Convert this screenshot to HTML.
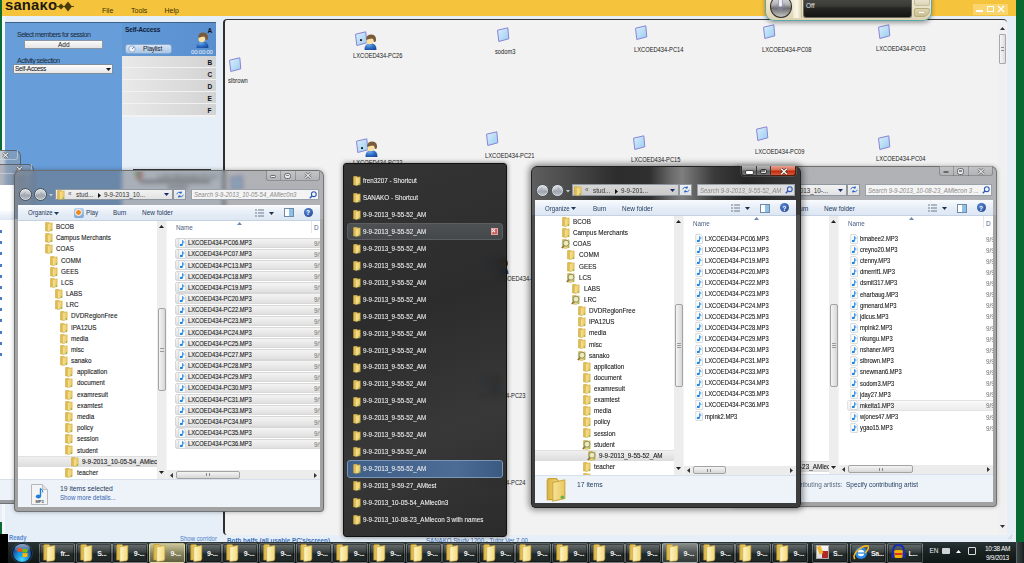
<!DOCTYPE html><html><head><meta charset="utf-8"><style>
*{margin:0;padding:0;box-sizing:border-box}
html,body{width:1024px;height:563px;overflow:hidden}
body{position:relative;background:#e6eff8;font-family:"Liberation Sans",sans-serif;color:#000}
div{position:absolute}
.t{white-space:nowrap;line-height:1}
.fo{width:7px;height:9px;background:linear-gradient(90deg,#e9c860 0%,#fbeaa4 35%,#f4d77a 70%,#d9b24a 100%);border:1px solid #c8a43e;border-radius:1px 2px 1px 1px}
.fs{width:9px;height:9px;}
.mp{width:7px;height:9px;background:#fff;border:1px solid #b9bec4;border-radius:1px}
.mp:after{content:"";position:absolute;left:1px;top:2px;width:3px;height:4px;border-radius:50%;background:#2f8fe0}
.ic{}

.frm{border-radius:6px 6px 4px 4px}
.nv{border-radius:50%;background:linear-gradient(#e2e4e6,#bcc2c8 48%,#98a0a8 52%,#c0c6cc);border:1.3px solid #4a525a;box-shadow:inset 0 0 0 0.6px #e8eaec}
.adr{background:linear-gradient(#f2f2f2,#e2e2e2);border:1px solid #8e96a0}
.srch{background:#f4f4f4;border:1px solid #9aa1aa}
.tb{background:linear-gradient(#f9fbfe,#e4ecf6 60%,#dde7f3);border-bottom:1px solid #c5d2e2}
.nvp{background:#fff}
.e{font-size:7px;letter-spacing:-0.35px;color:#1e1e1e}
.eb{font-size:7px;letter-spacing:-0.3px;color:#1e3a5f}
.sel{background:linear-gradient(#f2f2f2,#dedede);border:1px solid #d3d3d3;border-radius:2px}
.sb{background:#eaeaea}
.thumb{background:linear-gradient(90deg,#f4f4f4,#d7d7d7);border:1px solid #a3a3a3;border-radius:2px}
.thumbh{background:linear-gradient(#f4f4f4,#d7d7d7);border:1px solid #a3a3a3;border-radius:2px}
.dp{background:#eef3fa;border-top:1px solid #d6e1ee}

.tk{background:linear-gradient(#2a3434,#1a2222 45%,#0f1616);}
.tbn{background:linear-gradient(rgba(255,255,255,0.3),rgba(255,255,255,0.14) 45%,rgba(255,255,255,0.04) 55%,rgba(255,255,255,0.07));border:1px solid rgba(255,255,255,0.2);border-radius:2px;box-shadow:inset 0 0 0 1px rgba(0,0,0,0.4)}
.tbh{background:linear-gradient(rgba(230,230,225,0.5),rgba(170,175,170,0.35) 50%,rgba(110,120,115,0.35));border:1px solid rgba(255,255,255,0.4);border-radius:2px}
.tby{background:linear-gradient(rgba(245,235,180,0.8),rgba(200,190,130,0.65) 50%,rgba(150,145,95,0.6));border:1px solid rgba(255,250,200,0.55);border-radius:2px}
.tf{width:12px;height:16px;background:linear-gradient(90deg,#e0bd55,#fbe9a0 40%,#f0d57a 75%,#c9a040);border:1px solid #a88a30;border-radius:1px 3px 1px 1px}
</style></head><body><svg width="0" height="0" style="position:absolute"><defs><linearGradient id="gfl" x1="0" y1="0" x2="1" y2="0"><stop offset="0" stop-color="#f7e49a"/><stop offset="1" stop-color="#e9c85e"/></linearGradient><linearGradient id="gfb" x1="0" y1="0" x2="1" y2="0"><stop offset="0" stop-color="#d9b346"/><stop offset="1" stop-color="#f2d674"/></linearGradient><g id="fsm"><path d="M0.5 1 Q0.5 0.3 1.2 0.3 H4 L4.6 1 V9 H0.5Z" fill="url(#gfb)" stroke="#c9a43c" stroke-width="0.5"/><path d="M2.6 1.8 L7.2 0.8 V8.6 L2.6 9.6Z" fill="url(#gfl)" stroke="#d1ad45" stroke-width="0.5"/><circle cx="6.3" cy="8" r="0.7" fill="#6ab04a"/></g><g id="ftb"><path d="M0.7 1.5 Q0.7 0.5 1.7 0.5 H6 L7 1.6 V16 H0.7Z" fill="url(#gfb)" stroke="#b8942e" stroke-width="0.6"/><path d="M3.8 3 L11.8 1.4 V14.8 L10.8 16.8 L3.8 17.5Z" fill="url(#gft)" stroke="#c8a23a" stroke-width="0.6"/></g><linearGradient id="gft" x1="0" y1="0" x2="1" y2="0"><stop offset="0" stop-color="#fff6c8"/><stop offset="1" stop-color="#f2d878"/></linearGradient><g id="mp3s"><path d="M0.8 0.6H5.6L7.6 2.6V8.8Q7.6 9.4 7 9.4H1.4Q0.8 9.4 0.8 8.8Z" fill="#fdfdfd" stroke="#c4c8cc" stroke-width="0.7"/><path d="M4.6 2.4V6.8" stroke="#1a86e6" stroke-width="0.9"/><path d="M4.6 2.4Q6.4 3.4 5.8 5.2" stroke="#1a86e6" stroke-width="0.8" fill="none"/><ellipse cx="3.3" cy="6.9" rx="1.5" ry="1.2" fill="#1a86e6"/></g></defs></svg>
<div style="left:0px;top:0px;width:2px;height:150px;background:#0a6b33"></div>
<div style="left:0px;top:522px;width:1.5px;height:12px;background:#0a6b33"></div>
<div style="left:2px;top:0px;width:1014px;height:16px;background:#f6c33c"></div>
<div style="left:1016px;top:0px;width:8px;height:542px;background:#07692f"></div>
<div style="left:2px;top:16px;width:3px;height:518px;background:#f4f8fc"></div>
<div class="t" style="left:4.5px;top:-3.2px;font:bold 14.5px Liberation Sans,sans-serif;letter-spacing:0.2px;color:#1e1a10;transform:scaleX(1.02);transform-origin:0 0">sana&#954;o</div>
<svg style="position:absolute;left:55px;top:1px" width="20" height="12" viewBox="0 0 20 12"><path d="M0 5.5 H19" stroke="#5a4a10" stroke-width="1"/><path d="M3 5.5 L6 2.5 L9 5.5 L6 8.5Z M9 5.5 L13 0.5 L17 5.5 L13 10.5Z" fill="#4a3d0c"/></svg>
<div class="t" style="left:102px;top:7px;font-size:7px;color:#3b3000">File</div>
<div class="t" style="left:131px;top:7px;font-size:7px;color:#3b3000">Tools</div>
<div class="t" style="left:164.5px;top:7px;font-size:7px;color:#3b3000">Help</div>
<div style="left:973px;top:4px;width:35px;height:11px;background:rgba(255,235,170,0.45)"></div>
<div style="left:976px;top:10px;width:7px;height:2px;background:#fff"></div>
<div style="left:987px;top:6px;width:7px;height:6px;border:1px solid #fff"></div>
<svg style="position:absolute;left:997px;top:5px" width="8" height="8" viewBox="0 0 8 8"><path d="M1 1L7 7M7 1L1 7" stroke="#fff" stroke-width="1.3"/></svg>
<div style="left:5px;top:22px;width:211px;height:480px;background:#679dd8;border-top:1px solid #40618a"></div>
<div style="left:122px;top:23px;width:94px;height:33px;background:linear-gradient(90deg,#6199d6,#5a8fcf)"></div>
<div style="left:122px;top:116px;width:94px;height:400px;background:#e6eff8"></div>
<div style="left:122px;top:56px;width:94px;height:61px;background:#f2f2f2"></div>
<div style="left:216px;top:22px;width:8px;height:512px;background:#e6eff8"></div>
<div class="t" style="left:17px;top:31px;font-size:7px;letter-spacing:-0.5px;color:#1b2a3a">Select members for session</div>
<div style="left:24px;top:40px;width:79px;height:9px;background:linear-gradient(#fbfbfb,#e4e4e4);border:1px solid #8a96a4;border-radius:1px"></div>
<div class="t" style="left:58px;top:42px;font-size:6.5px;color:#222">Add</div>
<div class="t" style="left:17px;top:57px;font-size:7px;letter-spacing:-0.5px;color:#1b2a3a">Activity selection</div>
<div style="left:13px;top:64px;width:100px;height:10px;background:linear-gradient(#fdfdfd,#e6e6e6);border:1px solid #7f8c9a;border-radius:1px"></div>
<div class="t" style="left:15px;top:66px;font-size:6.5px;letter-spacing:-0.3px;color:#111">Self-Access</div>
<svg style="position:absolute;left:106px;top:68px" width="5" height="3"><path d="M0 0H5L2.5 3Z" fill="#111"/></svg>
<div class="t" style="left:125px;top:26px;font:bold 6.6px Liberation Sans,sans-serif;letter-spacing:-0.2px;color:#10203a">Self-Access</div>
<div class="t" style="left:207.5px;top:27px;font:bold 6.5px Liberation Sans,sans-serif;color:#111">A</div>
<div style="left:125px;top:44px;width:47px;height:10px;background:linear-gradient(#d7e6f6,#a9c6e6);border:1px solid #86a8d0;border-radius:3px"></div>
<svg style="position:absolute;left:128px;top:45px" width="8" height="8"><circle cx="4" cy="4" r="3.2" fill="#eef4fb" stroke="#7f9cc0" stroke-width="0.8"/><path d="M4 4L6 2" stroke="#667" stroke-width="0.8"/></svg>
<div class="t" style="left:143px;top:46px;font-size:6.5px;letter-spacing:-0.2px;color:#1a1a2a">Playlist</div>
<div class="t" style="left:191px;top:49px;font-size:6px;letter-spacing:-0.2px;color:#eaf2fb">00:00:00</div>
<div style="left:122px;top:56px;width:94px;height:11px;background:linear-gradient(90deg,#e9e9e9,#d3d3d3)"></div>
<div class="t" style="left:207.5px;top:59px;font:bold 6.5px Liberation Sans,sans-serif;color:#111">B</div>
<div style="left:122px;top:68px;width:94px;height:11px;background:linear-gradient(90deg,#e9e9e9,#d3d3d3)"></div>
<div class="t" style="left:207.5px;top:71px;font:bold 6.5px Liberation Sans,sans-serif;color:#111">C</div>
<div style="left:122px;top:80px;width:94px;height:11px;background:linear-gradient(90deg,#e9e9e9,#d3d3d3)"></div>
<div class="t" style="left:207.5px;top:83px;font:bold 6.5px Liberation Sans,sans-serif;color:#111">D</div>
<div style="left:122px;top:92px;width:94px;height:11px;background:linear-gradient(90deg,#e9e9e9,#d3d3d3)"></div>
<div class="t" style="left:207.5px;top:95px;font:bold 6.5px Liberation Sans,sans-serif;color:#111">E</div>
<div style="left:122px;top:104px;width:94px;height:11px;background:linear-gradient(90deg,#e9e9e9,#d3d3d3)"></div>
<div class="t" style="left:207.5px;top:107px;font:bold 6.5px Liberation Sans,sans-serif;color:#111">F</div>
<div style="left:223px;top:19px;width:784px;height:516px;background:#f2f2f2;border-top:1.5px solid #383838;border-left:2px solid #2e2e2e;border-radius:4px 4px 0 4px"></div>
<div style="left:998px;top:24px;width:8px;height:510px;background:#f0f0f0"></div>
<svg style="position:absolute;left:1000px;top:27px" width="5" height="3"><path d="M0 3H5L2.5 0Z" fill="#333"/></svg>
<div style="left:998.5px;top:33.5px;width:7.5px;height:30.5px;background:linear-gradient(90deg,#f6f6f6,#dcdcdc);border:1px solid #a8a8a8;border-radius:1px"></div>
<div style="left:1000.5px;top:46.5px;width:3.5px;height:4px;border-top:1px solid #8a8a8a;border-bottom:1px solid #8a8a8a;background:linear-gradient(transparent 35%,#8a8a8a 35%,#8a8a8a 65%,transparent 65%)"></div>
<svg style="position:absolute;left:1000px;top:525px" width="5" height="3"><path d="M0 0H5L2.5 3Z" fill="#333"/></svg>
<svg style="position:absolute;left:194.5px;top:31.5px" width="14" height="17" viewBox="0 0 14 17"><defs><radialGradient id="pb" cx="0.35" cy="0.3" r="0.8"><stop offset="0" stop-color="#6aa8e8"/><stop offset="0.6" stop-color="#2a68c0"/><stop offset="1" stop-color="#1a4a98"/></radialGradient></defs><path d="M1.5 16 Q1 9.5 7.5 9 Q13.8 9.5 13.5 16Z" fill="url(#pb)"/><ellipse cx="6.8" cy="7" rx="3.3" ry="3.2" fill="#fbe0a0"/><path d="M3.2 6 Q3 0.6 8.5 0.6 Q13.6 1 13 6.8 Q12.2 8.5 10.8 7.8 Q10.8 5 9 4.6 Q6 4.8 3.2 6Z" fill="#7a5a3a"/></svg>
<svg style="position:absolute;left:353.5px;top:30.5px" width="14" height="15" viewBox="0 0 14 15"><defs><linearGradient id="mg" x1="0" y1="0" x2="1" y2="1"><stop offset="0" stop-color="#dcf0fd"/><stop offset="1" stop-color="#98ccf0"/></linearGradient></defs><path d="M1.5 3.2 L11.8 0.8 L12.8 11.8 L2.8 14.5Z" fill="url(#mg)" stroke="#8a84d4" stroke-width="1"/></svg><svg style="position:absolute;left:362.5px;top:33.5px" width="14" height="17" viewBox="0 0 14 17"><defs><radialGradient id="pb" cx="0.35" cy="0.3" r="0.8"><stop offset="0" stop-color="#6aa8e8"/><stop offset="0.6" stop-color="#2a68c0"/><stop offset="1" stop-color="#1a4a98"/></radialGradient></defs><path d="M1.5 16 Q1 9.5 7.5 9 Q13.8 9.5 13.5 16Z" fill="url(#pb)"/><ellipse cx="6.8" cy="7" rx="3.3" ry="3.2" fill="#fbe0a0"/><path d="M3.2 6 Q3 0.6 8.5 0.6 Q13.6 1 13 6.8 Q12.2 8.5 10.8 7.8 Q10.8 5 9 4.6 Q6 4.8 3.2 6Z" fill="#7a5a3a"/></svg>
<div style="left:359.5px;top:39px;width:2.8px;height:2.4px;background:#111;border-radius:50%"></div>
<div class="t" style="left:353.27px;top:52.2px;font-size:7px;color:#1a1a1a;transform:scaleX(0.82);transform-origin:0 0">LXCOED434-PC26</div>
<svg style="position:absolute;left:496px;top:27px" width="14" height="15" viewBox="0 0 14 15"><defs><linearGradient id="mg" x1="0" y1="0" x2="1" y2="1"><stop offset="0" stop-color="#dcf0fd"/><stop offset="1" stop-color="#98ccf0"/></linearGradient></defs><path d="M1.5 3.2 L11.8 0.8 L12.8 11.8 L2.8 14.5Z" fill="url(#mg)" stroke="#8a84d4" stroke-width="1"/></svg>
<div class="t" style="left:495.29px;top:48.2px;font-size:7px;color:#1a1a1a;transform:scaleX(0.82);transform-origin:0 0">sodom3</div>
<svg style="position:absolute;left:634px;top:25px" width="14" height="15" viewBox="0 0 14 15"><defs><linearGradient id="mg" x1="0" y1="0" x2="1" y2="1"><stop offset="0" stop-color="#dcf0fd"/><stop offset="1" stop-color="#98ccf0"/></linearGradient></defs><path d="M1.5 3.2 L11.8 0.8 L12.8 11.8 L2.8 14.5Z" fill="url(#mg)" stroke="#8a84d4" stroke-width="1"/></svg>
<div class="t" style="left:633.77px;top:46.2px;font-size:7px;color:#1a1a1a;transform:scaleX(0.82);transform-origin:0 0">LXCOED434-PC14</div>
<svg style="position:absolute;left:762px;top:24px" width="14" height="15" viewBox="0 0 14 15"><defs><linearGradient id="mg" x1="0" y1="0" x2="1" y2="1"><stop offset="0" stop-color="#dcf0fd"/><stop offset="1" stop-color="#98ccf0"/></linearGradient></defs><path d="M1.5 3.2 L11.8 0.8 L12.8 11.8 L2.8 14.5Z" fill="url(#mg)" stroke="#8a84d4" stroke-width="1"/></svg>
<div class="t" style="left:761.77px;top:46.2px;font-size:7px;color:#1a1a1a;transform:scaleX(0.82);transform-origin:0 0">LXCOED434-PC08</div>
<svg style="position:absolute;left:877px;top:24px" width="14" height="15" viewBox="0 0 14 15"><defs><linearGradient id="mg" x1="0" y1="0" x2="1" y2="1"><stop offset="0" stop-color="#dcf0fd"/><stop offset="1" stop-color="#98ccf0"/></linearGradient></defs><path d="M1.5 3.2 L11.8 0.8 L12.8 11.8 L2.8 14.5Z" fill="url(#mg)" stroke="#8a84d4" stroke-width="1"/></svg>
<div class="t" style="left:876.27px;top:45.2px;font-size:7px;color:#1a1a1a;transform:scaleX(0.82);transform-origin:0 0">LXCOED434-PC03</div>
<svg style="position:absolute;left:228px;top:57px" width="14" height="15" viewBox="0 0 14 15"><defs><linearGradient id="mg" x1="0" y1="0" x2="1" y2="1"><stop offset="0" stop-color="#dcf0fd"/><stop offset="1" stop-color="#98ccf0"/></linearGradient></defs><path d="M1.5 3.2 L11.8 0.8 L12.8 11.8 L2.8 14.5Z" fill="url(#mg)" stroke="#8a84d4" stroke-width="1"/></svg>
<div class="t" style="left:228.11px;top:77.2px;font-size:7px;color:#1a1a1a;transform:scaleX(0.82);transform-origin:0 0">slbrown</div>
<svg style="position:absolute;left:354.5px;top:138px" width="14" height="15" viewBox="0 0 14 15"><defs><linearGradient id="mg" x1="0" y1="0" x2="1" y2="1"><stop offset="0" stop-color="#dcf0fd"/><stop offset="1" stop-color="#98ccf0"/></linearGradient></defs><path d="M1.5 3.2 L11.8 0.8 L12.8 11.8 L2.8 14.5Z" fill="url(#mg)" stroke="#8a84d4" stroke-width="1"/></svg><svg style="position:absolute;left:363.5px;top:140.5px" width="14" height="17" viewBox="0 0 14 17"><defs><radialGradient id="pb" cx="0.35" cy="0.3" r="0.8"><stop offset="0" stop-color="#6aa8e8"/><stop offset="0.6" stop-color="#2a68c0"/><stop offset="1" stop-color="#1a4a98"/></radialGradient></defs><path d="M1.5 16 Q1 9.5 7.5 9 Q13.8 9.5 13.5 16Z" fill="url(#pb)"/><ellipse cx="6.8" cy="7" rx="3.3" ry="3.2" fill="#fbe0a0"/><path d="M3.2 6 Q3 0.6 8.5 0.6 Q13.6 1 13 6.8 Q12.2 8.5 10.8 7.8 Q10.8 5 9 4.6 Q6 4.8 3.2 6Z" fill="#7a5a3a"/></svg>
<div style="left:360.5px;top:146.5px;width:2.8px;height:2.4px;background:#111;border-radius:50%"></div>
<div class="t" style="left:353.27px;top:159.2px;font-size:7px;color:#1a1a1a;transform:scaleX(0.82);transform-origin:0 0">LXCOED434-PC22</div>
<svg style="position:absolute;left:485px;top:131px" width="14" height="15" viewBox="0 0 14 15"><defs><linearGradient id="mg" x1="0" y1="0" x2="1" y2="1"><stop offset="0" stop-color="#dcf0fd"/><stop offset="1" stop-color="#98ccf0"/></linearGradient></defs><path d="M1.5 3.2 L11.8 0.8 L12.8 11.8 L2.8 14.5Z" fill="url(#mg)" stroke="#8a84d4" stroke-width="1"/></svg>
<div class="t" style="left:484.77px;top:152.2px;font-size:7px;color:#1a1a1a;transform:scaleX(0.82);transform-origin:0 0">LXCOED434-PC21</div>
<svg style="position:absolute;left:632px;top:135px" width="14" height="15" viewBox="0 0 14 15"><defs><linearGradient id="mg" x1="0" y1="0" x2="1" y2="1"><stop offset="0" stop-color="#dcf0fd"/><stop offset="1" stop-color="#98ccf0"/></linearGradient></defs><path d="M1.5 3.2 L11.8 0.8 L12.8 11.8 L2.8 14.5Z" fill="url(#mg)" stroke="#8a84d4" stroke-width="1"/></svg>
<div class="t" style="left:631.27px;top:155.7px;font-size:7px;color:#1a1a1a;transform:scaleX(0.82);transform-origin:0 0">LXCOED434-PC15</div>
<svg style="position:absolute;left:755px;top:126px" width="14" height="15" viewBox="0 0 14 15"><defs><linearGradient id="mg" x1="0" y1="0" x2="1" y2="1"><stop offset="0" stop-color="#dcf0fd"/><stop offset="1" stop-color="#98ccf0"/></linearGradient></defs><path d="M1.5 3.2 L11.8 0.8 L12.8 11.8 L2.8 14.5Z" fill="url(#mg)" stroke="#8a84d4" stroke-width="1"/></svg>
<div class="t" style="left:755.27px;top:147.7px;font-size:7px;color:#1a1a1a;transform:scaleX(0.82);transform-origin:0 0">LXCOED434-PC09</div>
<svg style="position:absolute;left:877px;top:135px" width="14" height="15" viewBox="0 0 14 15"><defs><linearGradient id="mg" x1="0" y1="0" x2="1" y2="1"><stop offset="0" stop-color="#dcf0fd"/><stop offset="1" stop-color="#98ccf0"/></linearGradient></defs><path d="M1.5 3.2 L11.8 0.8 L12.8 11.8 L2.8 14.5Z" fill="url(#mg)" stroke="#8a84d4" stroke-width="1"/></svg>
<div class="t" style="left:876.27px;top:155.2px;font-size:7px;color:#1a1a1a;transform:scaleX(0.82);transform-origin:0 0">LXCOED434-PC04</div>
<svg style="position:absolute;left:485px;top:255px" width="14" height="15" viewBox="0 0 14 15"><defs><linearGradient id="mg" x1="0" y1="0" x2="1" y2="1"><stop offset="0" stop-color="#dcf0fd"/><stop offset="1" stop-color="#98ccf0"/></linearGradient></defs><path d="M1.5 3.2 L11.8 0.8 L12.8 11.8 L2.8 14.5Z" fill="url(#mg)" stroke="#8a84d4" stroke-width="1"/></svg><svg style="position:absolute;left:495px;top:258px" width="14" height="17" viewBox="0 0 14 17"><defs><radialGradient id="pb" cx="0.35" cy="0.3" r="0.8"><stop offset="0" stop-color="#6aa8e8"/><stop offset="0.6" stop-color="#2a68c0"/><stop offset="1" stop-color="#1a4a98"/></radialGradient></defs><path d="M1.5 16 Q1 9.5 7.5 9 Q13.8 9.5 13.5 16Z" fill="url(#pb)"/><ellipse cx="6.8" cy="7" rx="3.3" ry="3.2" fill="#fbe0a0"/><path d="M3.2 6 Q3 0.6 8.5 0.6 Q13.6 1 13 6.8 Q12.2 8.5 10.8 7.8 Q10.8 5 9 4.6 Q6 4.8 3.2 6Z" fill="#7a5a3a"/></svg>
<div class="t" style="left:496.27px;top:275.2px;font-size:7px;color:#1a1a1a;transform:scaleX(0.82);transform-origin:0 0">LXCOED434-PC20</div>
<svg style="position:absolute;left:478px;top:372px" width="14" height="15" viewBox="0 0 14 15"><defs><linearGradient id="mg" x1="0" y1="0" x2="1" y2="1"><stop offset="0" stop-color="#dcf0fd"/><stop offset="1" stop-color="#98ccf0"/></linearGradient></defs><path d="M1.5 3.2 L11.8 0.8 L12.8 11.8 L2.8 14.5Z" fill="url(#mg)" stroke="#8a84d4" stroke-width="1"/></svg><svg style="position:absolute;left:488px;top:375px" width="14" height="17" viewBox="0 0 14 17"><defs><radialGradient id="pb" cx="0.35" cy="0.3" r="0.8"><stop offset="0" stop-color="#6aa8e8"/><stop offset="0.6" stop-color="#2a68c0"/><stop offset="1" stop-color="#1a4a98"/></radialGradient></defs><path d="M1.5 16 Q1 9.5 7.5 9 Q13.8 9.5 13.5 16Z" fill="url(#pb)"/><ellipse cx="6.8" cy="7" rx="3.3" ry="3.2" fill="#fbe0a0"/><path d="M3.2 6 Q3 0.6 8.5 0.6 Q13.6 1 13 6.8 Q12.2 8.5 10.8 7.8 Q10.8 5 9 4.6 Q6 4.8 3.2 6Z" fill="#7a5a3a"/></svg>
<div class="t" style="left:476.27px;top:391.7px;font-size:7px;color:#1a1a1a;transform:scaleX(0.82);transform-origin:0 0">LXCOED434-PC23</div>
<svg style="position:absolute;left:478px;top:459px" width="14" height="15" viewBox="0 0 14 15"><defs><linearGradient id="mg" x1="0" y1="0" x2="1" y2="1"><stop offset="0" stop-color="#dcf0fd"/><stop offset="1" stop-color="#98ccf0"/></linearGradient></defs><path d="M1.5 3.2 L11.8 0.8 L12.8 11.8 L2.8 14.5Z" fill="url(#mg)" stroke="#8a84d4" stroke-width="1"/></svg>
<div class="t" style="left:476.27px;top:478.7px;font-size:7px;color:#1a1a1a;transform:scaleX(0.82);transform-origin:0 0">LXCOED434-PC24</div>
<div style="left:765px;top:-6px;width:167px;height:26.5px;background:linear-gradient(#f6f2e4,#e8dfc0 60%,#ddd2b0);border:1.5px solid #5aa8a8;border-top:none;border-radius:0 0 9px 9px;box-shadow:0 2px 4px rgba(0,0,0,0.35)"></div>
<div style="left:769.5px;top:-5px;width:22px;height:22.5px;background:linear-gradient(#e4e4e4,#b4b4b4 40%,#6e6e6e 58%,#9a9a9a 80%,#c8c8c8);border:1.3px solid #2e2e2e;border-radius:50%"></div>
<svg style="position:absolute;left:775px;top:0px" width="11" height="14" viewBox="0 0 11 14"><rect x="3.5" y="-2" width="4" height="9" rx="2" fill="#f0f0f4" stroke="#8a88b0" stroke-width="0.7"/><path d="M1.8 4Q1.8 9 5.5 9Q9.2 9 9.2 4M5.5 9V12" stroke="#8a88b0" stroke-width="0.8" fill="none"/></svg>
<div style="left:793px;top:0px;width:9px;height:18px;background:linear-gradient(90deg,#efe8d0,#faf6ea 50%,#e0d6b6);border-right:1px solid #c8c0a0"></div>
<div style="left:803px;top:-3px;width:109px;height:21px;background:linear-gradient(#4a4a47,#3a3a37 45%,#262623 55%,#141412);border-radius:0 0 3px 3px;border:1px solid #6a6a60;border-top:none"></div>
<div class="t" style="left:806px;top:3px;font-size:6.5px;color:#e8e8e8">Off</div>
<div style="left:914px;top:8px;width:16px;height:9px;background:linear-gradient(#ddd3ad,#c9bd92);border-radius:2px 2px 7px 2px;border:1px solid #b7ab80"></div>
<div style="left:919px;top:12px;width:5px;height:1.3px;background:#fff"></div>
<div style="left:914px;top:-3px;width:16px;height:9px;background:linear-gradient(#efe9d4,#ddd4b6);border-radius:2px;border:1px solid #c5bc9c"></div>
<div class="t" style="left:8.5px;top:535px;font-size:6.5px;font-weight:bold;color:#5a8ad0;transform:scaleX(0.9);transform-origin:0 0">Ready</div>
<div class="t" style="left:180px;top:535.5px;font-size:6.3px;color:#4a7cc8;text-decoration:underline;transform:scaleX(0.95);transform-origin:0 0">Show corridor</div>
<div class="t" style="left:227px;top:537px;font:bold 6.3px Liberation Sans,sans-serif;color:#3b6db5">Both halfs (all usable PC's/screen)</div>
<div class="t" style="left:425.5px;top:537.5px;font-size:6.8px;color:#3b6db5;transform:scaleX(0.9);transform-origin:0 0">SANAKO Study 1200 - Tutor Ver 7.00</div>
<div style="left:0px;top:534px;width:8px;height:29px;background:#000"></div>
<div class="frm" style="left:-60px;top:150px;width:81px;height:340px;background:rgba(150,156,164,0.45);backdrop-filter:blur(1.5px);border:1px solid rgba(60,60,60,0.6)"></div>
<div style="left:-20px;top:150px;width:37.5px;height:10px;border:1px solid rgba(230,230,230,0.5);border-top:none;border-radius:0 0 3px 3px"></div>
<svg style="position:absolute;left:2px;top:152px" width="7" height="6.5" viewBox="0 0 8 7"><path d="M1.2 0.8L6.8 6.2M6.8 0.8L1.2 6.2" stroke="#5a5a5a" stroke-width="2.6"/><path d="M1.2 0.8L6.8 6.2M6.8 0.8L1.2 6.2" stroke="#f4f4f4" stroke-width="1.3"/></svg>
<div class="frm" style="left:-40px;top:163.5px;width:74px;height:340px;background:rgba(150,156,164,0.45);backdrop-filter:blur(1.5px);border:1px solid rgba(60,60,60,0.6)"></div>
<div style="left:-6px;top:163.5px;width:37.5px;height:10px;border:1px solid rgba(230,230,230,0.5);border-top:none;border-radius:0 0 3px 3px"></div>
<svg style="position:absolute;left:15.5px;top:165.5px" width="7" height="6.5" viewBox="0 0 8 7"><path d="M1.2 0.8L6.8 6.2M6.8 0.8L1.2 6.2" stroke="#5a5a5a" stroke-width="2.6"/><path d="M1.2 0.8L6.8 6.2M6.8 0.8L1.2 6.2" stroke="#f4f4f4" stroke-width="1.3"/></svg>
<div style="left:0px;top:185px;width:14px;height:294px;background:#fff"></div>
<div style="left:0px;top:211px;width:14px;height:9px;background:linear-gradient(#f9fbfe,#dde7f3)"></div>
<div style="left:0px;top:479px;width:14px;height:24px;background:#eef3fa;border-top:1px solid #d6e1ee;border-bottom:3px solid #9a9ea2"></div>
<div style="left:0px;top:230.0px;width:2px;height:3px;background:#4a7ac8"></div>
<div style="left:0px;top:241.17px;width:2px;height:3px;background:#4a7ac8"></div>
<div style="left:0px;top:252.34px;width:2px;height:3px;background:#4a7ac8"></div>
<div style="left:0px;top:263.51px;width:2px;height:3px;background:#4a7ac8"></div>
<div style="left:0px;top:274.68px;width:2px;height:3px;background:#4a7ac8"></div>
<div style="left:0px;top:285.85px;width:2px;height:3px;background:#4a7ac8"></div>
<div style="left:0px;top:297.02px;width:2px;height:3px;background:#4a7ac8"></div>
<div style="left:0px;top:308.19px;width:2px;height:3px;background:#4a7ac8"></div>
<div style="left:0px;top:319.36px;width:2px;height:3px;background:#4a7ac8"></div>
<div style="left:0px;top:330.53px;width:2px;height:3px;background:#4a7ac8"></div>
<div style="left:0px;top:341.7px;width:2px;height:3px;background:#4a7ac8"></div>
<div style="left:0px;top:352.87px;width:2px;height:3px;background:#4a7ac8"></div>
<div style="left:133px;top:168.5px;width:78px;height:1.5px;background:#3a3a3a"></div>
<div style="left:135px;top:172px;width:4px;height:4px;background:#5a9a4a"></div><div style="left:139px;top:172px;width:4px;height:4px;background:#c8584a"></div><div style="left:137px;top:177px;width:4px;height:3px;background:#b04a3a"></div>
<div class="t" style="left:158px;top:173px;font-size:7px;color:#333">LXCOED434-PC17</div>
<div style="left:140px;top:180px;width:70px;height:3px;background:#777"></div>
<div style="left:168px;top:186px;width:20px;height:2px;background:#555"></div>

<svg style="position:absolute;left:229px;top:175px" width="15" height="16" viewBox="0 0 14 15"><path d="M1.5 2.5 L12 0.8 L13 12.5 L2.8 14.3Z" fill="#a8d0ee" stroke="#7b7fd0" stroke-width="1"/></svg>
<div class="frm" style="left:13.5px;top:170px;width:310.5px;height:342px;background:linear-gradient(rgba(108,112,120,0.5),rgba(114,118,124,0.52) 48px,#a6a6a6 48px,#a2a2a2);border:1px solid rgba(70,70,70,0.55);box-shadow:0 0 4px rgba(0,0,0,0.3);backdrop-filter:blur(2px)"></div><div style="left:265.5px;top:170.5px;width:54.5px;height:10px;border:1px solid rgba(80,80,80,0.45);border-top:none;border-radius:0 0 3px 3px;background:linear-gradient(rgba(225,225,225,0.4),rgba(190,190,190,0.3))"></div><div style="left:279.5px;top:170.5px;width:1px;height:9.5px;background:rgba(80,80,80,0.35)"></div><div style="left:294.5px;top:170.5px;width:1px;height:9.5px;background:rgba(80,80,80,0.35)"></div><div style="left:269.5px;top:175.0px;width:6.5px;height:2.5px;background:#f0f0f0;border:0.7px solid #6a6a6a;border-radius:1.2px"></div><div style="left:283.5px;top:172.5px;width:7px;height:6.5px;background:#e8e8e8;border:0.8px solid #6a6a6a;border-radius:2.5px"></div><div style="left:285.5px;top:174.8px;width:3px;height:1.5px;background:#888"></div><svg style="position:absolute;left:304.0px;top:172.3px" width="8" height="7" viewBox="0 0 8 7"><path d="M1.2 0.8L6.8 6.2M6.8 0.8L1.2 6.2" stroke="#6a6a6a" stroke-width="2.4"/><path d="M1.2 0.8L6.8 6.2M6.8 0.8L1.2 6.2" stroke="#eeeeee" stroke-width="1.1"/></svg><div class="nv" style="left:19.0px;top:188px;width:13px;height:13px;"></div><div class="nv" style="left:34.0px;top:188px;width:13px;height:13px;"></div><svg style="position:absolute;left:22.0px;top:191.5px" width="7" height="6"><path d="M6 3H1M3.5 0.5L1 3L3.5 5.5" stroke="#aab" stroke-width="1.2" fill="none"/></svg><svg style="position:absolute;left:37.0px;top:191.5px" width="7" height="6"><path d="M1 3H6M3.5 0.5L6 3L3.5 5.5" stroke="#aab" stroke-width="1.2" fill="none"/></svg><svg style="position:absolute;left:48.5px;top:194px" width="4" height="3"><path d="M0 0H4L2 2.5Z" fill="#ccc"/></svg><div class="adr" style="left:54.5px;top:188.5px;width:118px;height:11.5px;"></div><svg style="position:absolute;left:56.5px;top:190px" width="8" height="10" viewBox="0 0 8 10"><use href="#fsm"/></svg><div style="left:65.5px;top:189px;width:95px;height:10px;overflow:hidden"><div class="t" style="left:2.5px;top:2.2px;font-size:6.5px;color:#555;transform:scaleX(1);transform-origin:0 0;">&#171;</div><div class="t" style="left:10.5px;top:2px;font-size:7px;color:#333;transform:scaleX(0.9);transform-origin:0 0;">stud...</div><svg style="position:absolute;left:32px;top:4px" width="3" height="5"><path d="M0 0V5L3 2.5Z" fill="#111"/></svg><div class="t" style="left:38.5px;top:2px;font-size:7px;color:#333;transform:scaleX(0.9);transform-origin:0 0;">9-9-2013_10...</div></div><svg style="position:absolute;left:163.5px;top:193px" width="5" height="3"><path d="M0 0H5L2.5 3Z" fill="#1a2a6a"/></svg><div class="adr" style="left:172.5px;top:188.5px;width:13px;height:11.5px;"></div><svg style="position:absolute;left:175.5px;top:190.5px" width="8" height="7" viewBox="0 0 8 7"><path d="M0.5 3 Q2 0.5 5 1.5 M5 0.3 L5.5 2 L3.8 2.3 M7.5 4 Q6 6.5 3 5.5 M3 6.7 L2.5 5 L4.2 4.7" stroke="#2a6ac8" stroke-width="1" fill="none"/></svg><div class="srch" style="left:190.5px;top:188.5px;width:128.0px;height:11.5px;"></div><div class="t" style="left:193.5px;top:191px;font-size:7px;color:#8a8a8a;transform:scaleX(0.86);transform-origin:0 0;font-style:italic">Search 9-9-2013_10-05-54_AMlec0n3</div><svg style="position:absolute;left:308.5px;top:190.5px" width="8" height="8" viewBox="0 0 8 8"><circle cx="4.8" cy="3.2" r="2.4" fill="none" stroke="#2a5ab8" stroke-width="1.1"/><path d="M3.2 4.8L0.8 7.2" stroke="#2a5ab8" stroke-width="1.4"/></svg><div class="tb" style="left:18.0px;top:204.5px;width:301.5px;height:16px;"></div><div class="t" style="left:28.0px;top:209.0px;font-size:7px;color:#1e395b;transform:scaleX(0.87);transform-origin:0 0;">Organize</div><svg style="position:absolute;left:54.0px;top:211.5px" width="5" height="3"><path d="M0 0H5L2.5 3Z" fill="#1e395b"/></svg><div style="left:73.5px;top:207.5px;width:10px;height:10px;background:linear-gradient(#b9d4f0,#7aa6d8);border-radius:2px"></div><div style="left:75.0px;top:209.0px;width:7px;height:7px;background:#f08a1a;border-radius:50%;border:1px solid #fff"></div><div class="t" style="left:85.5px;top:209.0px;font-size:7px;color:#1e395b;transform:scaleX(0.9);transform-origin:0 0;">Play</div><div class="t" style="left:112.5px;top:209.0px;font-size:7px;color:#1e395b;transform:scaleX(0.9);transform-origin:0 0;">Burn</div><div class="t" style="left:141.5px;top:209.0px;font-size:7px;color:#1e395b;transform:scaleX(0.92);transform-origin:0 0;">New folder</div><svg style="position:absolute;left:254.5px;top:208.5px" width="10" height="9" viewBox="0 0 10 9"><path d="M0 1H2M3 1H9M0 4H2M3 4H9M0 7H2M3 7H9" stroke="#6a7a8a" stroke-width="1"/></svg><svg style="position:absolute;left:268.5px;top:211.5px" width="5" height="3"><path d="M0 0H5L2.5 3Z" fill="#1e2e4e"/></svg><div style="left:283.5px;top:208.0px;width:10px;height:9px;background:linear-gradient(90deg,#fff 55%,#8fc0e8 55%);border:1px solid #6f8aa8"></div><div style="left:303.5px;top:207.5px;width:9px;height:9px;background:radial-gradient(circle at 40% 35%,#5a8ad8,#1a3a8a);border-radius:50%"></div><div class="t" style="left:306.0px;top:209.0px;font:bold 6.5px Liberation Sans,sans-serif;color:#fff">?</div><div style="left:18.0px;top:220.5px;width:301.5px;height:258.5px;background:#fff"></div><div style="left:157.0px;top:220.5px;width:9px;height:258.5px;background:#ededed"></div><svg style="position:absolute;left:159.0px;top:224.5px" width="5" height="3"><path d="M0 3H5L2.5 0Z" fill="#222"/></svg><svg style="position:absolute;left:159.0px;top:471px" width="5" height="3"><path d="M0 0H5L2.5 3Z" fill="#222"/></svg><div class="thumb" style="left:157.5px;top:308.0px;width:8px;height:83px;"></div><div style="left:159.5px;top:347.5px;width:4px;height:4.5px;border-top:1px solid #9a9a9a;border-bottom:1px solid #9a9a9a;background:linear-gradient(transparent 35%,#9a9a9a 35%,#9a9a9a 65%,transparent 65%)"></div><div style="left:166.0px;top:220.5px;width:1px;height:258.5px;background:#f4f4f4"></div><div style="left:18.0px;top:220.5px;width:139px;height:258.5px;overflow:hidden"><div style="left:-18.0px;top:-220.5px;width:1024px;height:563px"><svg style="position:absolute;left:44.5px;top:222.0px" width="8" height="10" viewBox="0 0 8 10"><use href="#fsm"/></svg><div class="t" style="left:55.8px;top:223.1px;font-size:7.2px;color:#161616;transform:scaleX(0.88);transform-origin:0 0;-webkit-text-stroke:0.12px #333">BCOB</div><svg style="position:absolute;left:44.5px;top:233.17px" width="8" height="10" viewBox="0 0 8 10"><use href="#fsm"/></svg><div class="t" style="left:55.8px;top:234.26999999999998px;font-size:7.2px;color:#161616;transform:scaleX(0.88);transform-origin:0 0;-webkit-text-stroke:0.12px #333">Campus Merchants</div><svg style="position:absolute;left:44.5px;top:244.34px" width="8" height="10" viewBox="0 0 8 10"><use href="#fsm"/></svg><div class="t" style="left:55.8px;top:245.44px;font-size:7.2px;color:#161616;transform:scaleX(0.88);transform-origin:0 0;-webkit-text-stroke:0.12px #333">COAS</div><svg style="position:absolute;left:49.7px;top:255.51px" width="8" height="10" viewBox="0 0 8 10"><use href="#fsm"/></svg><div class="t" style="left:61.0px;top:256.61px;font-size:7.2px;color:#161616;transform:scaleX(0.88);transform-origin:0 0;-webkit-text-stroke:0.12px #333">COMM</div><svg style="position:absolute;left:49.7px;top:266.68px" width="8" height="10" viewBox="0 0 8 10"><use href="#fsm"/></svg><div class="t" style="left:61.0px;top:267.78000000000003px;font-size:7.2px;color:#161616;transform:scaleX(0.88);transform-origin:0 0;-webkit-text-stroke:0.12px #333">GEES</div><svg style="position:absolute;left:49.7px;top:277.85px" width="8" height="10" viewBox="0 0 8 10"><use href="#fsm"/></svg><div class="t" style="left:61.0px;top:278.95000000000005px;font-size:7.2px;color:#161616;transform:scaleX(0.88);transform-origin:0 0;-webkit-text-stroke:0.12px #333">LCS</div><svg style="position:absolute;left:54.9px;top:289.02px" width="8" height="10" viewBox="0 0 8 10"><use href="#fsm"/></svg><div class="t" style="left:66.2px;top:290.12px;font-size:7.2px;color:#161616;transform:scaleX(0.88);transform-origin:0 0;-webkit-text-stroke:0.12px #333">LABS</div><svg style="position:absolute;left:54.9px;top:300.19px" width="8" height="10" viewBox="0 0 8 10"><use href="#fsm"/></svg><div class="t" style="left:66.2px;top:301.29px;font-size:7.2px;color:#161616;transform:scaleX(0.88);transform-origin:0 0;-webkit-text-stroke:0.12px #333">LRC</div><svg style="position:absolute;left:60.1px;top:311.36px" width="8" height="10" viewBox="0 0 8 10"><use href="#fsm"/></svg><div class="t" style="left:71.4px;top:312.46000000000004px;font-size:7.2px;color:#161616;transform:scaleX(0.88);transform-origin:0 0;-webkit-text-stroke:0.12px #333">DVDRegionFree</div><svg style="position:absolute;left:60.1px;top:322.53px" width="8" height="10" viewBox="0 0 8 10"><use href="#fsm"/></svg><div class="t" style="left:71.4px;top:323.63px;font-size:7.2px;color:#161616;transform:scaleX(0.88);transform-origin:0 0;-webkit-text-stroke:0.12px #333">IPA12US</div><svg style="position:absolute;left:60.1px;top:333.7px" width="8" height="10" viewBox="0 0 8 10"><use href="#fsm"/></svg><div class="t" style="left:71.4px;top:334.8px;font-size:7.2px;color:#161616;transform:scaleX(0.88);transform-origin:0 0;-webkit-text-stroke:0.12px #333">media</div><svg style="position:absolute;left:60.1px;top:344.87px" width="8" height="10" viewBox="0 0 8 10"><use href="#fsm"/></svg><div class="t" style="left:71.4px;top:345.97px;font-size:7.2px;color:#161616;transform:scaleX(0.88);transform-origin:0 0;-webkit-text-stroke:0.12px #333">misc</div><svg style="position:absolute;left:60.1px;top:356.03999999999996px" width="8" height="10" viewBox="0 0 8 10"><use href="#fsm"/></svg><div class="t" style="left:71.4px;top:357.14px;font-size:7.2px;color:#161616;transform:scaleX(0.88);transform-origin:0 0;-webkit-text-stroke:0.12px #333">sanako</div><svg style="position:absolute;left:65.3px;top:367.21000000000004px" width="8" height="10" viewBox="0 0 8 10"><use href="#fsm"/></svg><div class="t" style="left:76.6px;top:368.31000000000006px;font-size:7.2px;color:#161616;transform:scaleX(0.88);transform-origin:0 0;-webkit-text-stroke:0.12px #333">application</div><svg style="position:absolute;left:65.3px;top:378.38px" width="8" height="10" viewBox="0 0 8 10"><use href="#fsm"/></svg><div class="t" style="left:76.6px;top:379.48px;font-size:7.2px;color:#161616;transform:scaleX(0.88);transform-origin:0 0;-webkit-text-stroke:0.12px #333">document</div><svg style="position:absolute;left:65.3px;top:389.55px" width="8" height="10" viewBox="0 0 8 10"><use href="#fsm"/></svg><div class="t" style="left:76.6px;top:390.65000000000003px;font-size:7.2px;color:#161616;transform:scaleX(0.88);transform-origin:0 0;-webkit-text-stroke:0.12px #333">examresult</div><svg style="position:absolute;left:65.3px;top:400.72px" width="8" height="10" viewBox="0 0 8 10"><use href="#fsm"/></svg><div class="t" style="left:76.6px;top:401.82000000000005px;font-size:7.2px;color:#161616;transform:scaleX(0.88);transform-origin:0 0;-webkit-text-stroke:0.12px #333">examtest</div><svg style="position:absolute;left:65.3px;top:411.89px" width="8" height="10" viewBox="0 0 8 10"><use href="#fsm"/></svg><div class="t" style="left:76.6px;top:412.99px;font-size:7.2px;color:#161616;transform:scaleX(0.88);transform-origin:0 0;-webkit-text-stroke:0.12px #333">media</div><svg style="position:absolute;left:65.3px;top:423.06px" width="8" height="10" viewBox="0 0 8 10"><use href="#fsm"/></svg><div class="t" style="left:76.6px;top:424.16px;font-size:7.2px;color:#161616;transform:scaleX(0.88);transform-origin:0 0;-webkit-text-stroke:0.12px #333">policy</div><svg style="position:absolute;left:65.3px;top:434.23px" width="8" height="10" viewBox="0 0 8 10"><use href="#fsm"/></svg><div class="t" style="left:76.6px;top:435.33000000000004px;font-size:7.2px;color:#161616;transform:scaleX(0.88);transform-origin:0 0;-webkit-text-stroke:0.12px #333">session</div><svg style="position:absolute;left:65.3px;top:445.4px" width="8" height="10" viewBox="0 0 8 10"><use href="#fsm"/></svg><div class="t" style="left:76.6px;top:446.5px;font-size:7.2px;color:#161616;transform:scaleX(0.88);transform-origin:0 0;-webkit-text-stroke:0.12px #333">student</div><div style="left:18.0px;top:456.07px;width:139px;height:10.5px;background:linear-gradient(#f0f0f0,#dcdcdc);border-top:1px solid #e0e0e0"></div><svg style="position:absolute;left:70.5px;top:456.57px" width="8" height="10" viewBox="0 0 8 10"><use href="#fsm"/></svg><div class="t" style="left:81.8px;top:457.67px;font-size:7.2px;color:#161616;transform:scaleX(0.88);transform-origin:0 0;-webkit-text-stroke:0.12px #333">9-9-2013_10-05-54_AMlec0n3</div><svg style="position:absolute;left:65.3px;top:467.74px" width="8" height="10" viewBox="0 0 8 10"><use href="#fsm"/></svg><div class="t" style="left:76.6px;top:468.84000000000003px;font-size:7.2px;color:#161616;transform:scaleX(0.88);transform-origin:0 0;-webkit-text-stroke:0.12px #333">teacher</div><svg style="position:absolute;left:65.3px;top:478.91px" width="8" height="10" viewBox="0 0 8 10"><use href="#fsm"/></svg><div class="t" style="left:76.6px;top:480.01000000000005px;font-size:7.2px;color:#161616;transform:scaleX(0.88);transform-origin:0 0;-webkit-text-stroke:0.12px #333"></div></div></div><div class="t" style="left:176.0px;top:224.0px;font-size:7px;color:#4d6185;transform:scaleX(0.9);transform-origin:0 0;">Name</div><svg style="position:absolute;left:237.0px;top:221.5px" width="5" height="3"><path d="M0 3H5L2.5 0Z" fill="#6a8ab0"/></svg><div style="left:310.5px;top:220.5px;width:1px;height:12px;background:#e6e6e6"></div><div class="t" style="left:313.5px;top:224.0px;font-size:7px;color:#4d6185;transform:scaleX(0.9);transform-origin:0 0;">D</div><div style="left:167.0px;top:232.5px;width:152.5px;height:246.5px;overflow:hidden"><div style="left:-167.0px;top:-232.5px;width:1024px;height:563px"><div style="left:175.0px;top:237.6px;width:148.5px;height:10.3px;background:linear-gradient(#f4f4f4,#e0e0e0);border:1px solid #d8d8d8;border-radius:2px"></div><svg style="position:absolute;left:177.8px;top:237.79999999999998px" width="9" height="10" viewBox="0 0 9 10"><use href="#mp3s"/></svg><div class="t" style="left:187.5px;top:239.2px;font-size:7.2px;color:#111;transform:scaleX(0.81);transform-origin:0 0;-webkit-text-stroke:0.12px #333">LXCOED434-PC06.MP3</div><div class="t" style="left:313.5px;top:239.79999999999998px;font-size:7px;color:#6d6d6d;transform:scaleX(0.9);transform-origin:0 0;">9/9</div><div style="left:175.0px;top:248.76999999999998px;width:148.5px;height:10.3px;background:linear-gradient(#f4f4f4,#e0e0e0);border:1px solid #d8d8d8;border-radius:2px"></div><svg style="position:absolute;left:177.8px;top:248.96999999999997px" width="9" height="10" viewBox="0 0 9 10"><use href="#mp3s"/></svg><div class="t" style="left:187.5px;top:250.36999999999998px;font-size:7.2px;color:#111;transform:scaleX(0.81);transform-origin:0 0;-webkit-text-stroke:0.12px #333">LXCOED434-PC07.MP3</div><div class="t" style="left:313.5px;top:250.96999999999997px;font-size:7px;color:#6d6d6d;transform:scaleX(0.9);transform-origin:0 0;">9/9</div><div style="left:175.0px;top:259.94px;width:148.5px;height:10.3px;background:linear-gradient(#f4f4f4,#e0e0e0);border:1px solid #d8d8d8;border-radius:2px"></div><svg style="position:absolute;left:177.8px;top:260.14px" width="9" height="10" viewBox="0 0 9 10"><use href="#mp3s"/></svg><div class="t" style="left:187.5px;top:261.54px;font-size:7.2px;color:#111;transform:scaleX(0.81);transform-origin:0 0;-webkit-text-stroke:0.12px #333">LXCOED434-PC13.MP3</div><div class="t" style="left:313.5px;top:262.14px;font-size:7px;color:#6d6d6d;transform:scaleX(0.9);transform-origin:0 0;">9/9</div><div style="left:175.0px;top:271.11px;width:148.5px;height:10.3px;background:linear-gradient(#f4f4f4,#e0e0e0);border:1px solid #d8d8d8;border-radius:2px"></div><svg style="position:absolute;left:177.8px;top:271.31px" width="9" height="10" viewBox="0 0 9 10"><use href="#mp3s"/></svg><div class="t" style="left:187.5px;top:272.71000000000004px;font-size:7.2px;color:#111;transform:scaleX(0.81);transform-origin:0 0;-webkit-text-stroke:0.12px #333">LXCOED434-PC18.MP3</div><div class="t" style="left:313.5px;top:273.31px;font-size:7px;color:#6d6d6d;transform:scaleX(0.9);transform-origin:0 0;">9/9</div><div style="left:175.0px;top:282.28px;width:148.5px;height:10.3px;background:linear-gradient(#f4f4f4,#e0e0e0);border:1px solid #d8d8d8;border-radius:2px"></div><svg style="position:absolute;left:177.8px;top:282.47999999999996px" width="9" height="10" viewBox="0 0 9 10"><use href="#mp3s"/></svg><div class="t" style="left:187.5px;top:283.88px;font-size:7.2px;color:#111;transform:scaleX(0.81);transform-origin:0 0;-webkit-text-stroke:0.12px #333">LXCOED434-PC19.MP3</div><div class="t" style="left:313.5px;top:284.47999999999996px;font-size:7px;color:#6d6d6d;transform:scaleX(0.9);transform-origin:0 0;">9/9</div><div style="left:175.0px;top:293.45px;width:148.5px;height:10.3px;background:linear-gradient(#f4f4f4,#e0e0e0);border:1px solid #d8d8d8;border-radius:2px"></div><svg style="position:absolute;left:177.8px;top:293.65px" width="9" height="10" viewBox="0 0 9 10"><use href="#mp3s"/></svg><div class="t" style="left:187.5px;top:295.05px;font-size:7.2px;color:#111;transform:scaleX(0.81);transform-origin:0 0;-webkit-text-stroke:0.12px #333">LXCOED434-PC20.MP3</div><div class="t" style="left:313.5px;top:295.65px;font-size:7px;color:#6d6d6d;transform:scaleX(0.9);transform-origin:0 0;">9/9</div><div style="left:175.0px;top:304.62px;width:148.5px;height:10.3px;background:linear-gradient(#f4f4f4,#e0e0e0);border:1px solid #d8d8d8;border-radius:2px"></div><svg style="position:absolute;left:177.8px;top:304.82px" width="9" height="10" viewBox="0 0 9 10"><use href="#mp3s"/></svg><div class="t" style="left:187.5px;top:306.22px;font-size:7.2px;color:#111;transform:scaleX(0.81);transform-origin:0 0;-webkit-text-stroke:0.12px #333">LXCOED434-PC22.MP3</div><div class="t" style="left:313.5px;top:306.82px;font-size:7px;color:#6d6d6d;transform:scaleX(0.9);transform-origin:0 0;">9/9</div><div style="left:175.0px;top:315.78999999999996px;width:148.5px;height:10.3px;background:linear-gradient(#f4f4f4,#e0e0e0);border:1px solid #d8d8d8;border-radius:2px"></div><svg style="position:absolute;left:177.8px;top:315.98999999999995px" width="9" height="10" viewBox="0 0 9 10"><use href="#mp3s"/></svg><div class="t" style="left:187.5px;top:317.39px;font-size:7.2px;color:#111;transform:scaleX(0.81);transform-origin:0 0;-webkit-text-stroke:0.12px #333">LXCOED434-PC23.MP3</div><div class="t" style="left:313.5px;top:317.98999999999995px;font-size:7px;color:#6d6d6d;transform:scaleX(0.9);transform-origin:0 0;">9/9</div><div style="left:175.0px;top:326.96px;width:148.5px;height:10.3px;background:linear-gradient(#f4f4f4,#e0e0e0);border:1px solid #d8d8d8;border-radius:2px"></div><svg style="position:absolute;left:177.8px;top:327.15999999999997px" width="9" height="10" viewBox="0 0 9 10"><use href="#mp3s"/></svg><div class="t" style="left:187.5px;top:328.56px;font-size:7.2px;color:#111;transform:scaleX(0.81);transform-origin:0 0;-webkit-text-stroke:0.12px #333">LXCOED434-PC24.MP3</div><div class="t" style="left:313.5px;top:329.15999999999997px;font-size:7px;color:#6d6d6d;transform:scaleX(0.9);transform-origin:0 0;">9/9</div><div style="left:175.0px;top:338.13px;width:148.5px;height:10.3px;background:linear-gradient(#f4f4f4,#e0e0e0);border:1px solid #d8d8d8;border-radius:2px"></div><svg style="position:absolute;left:177.8px;top:338.33px" width="9" height="10" viewBox="0 0 9 10"><use href="#mp3s"/></svg><div class="t" style="left:187.5px;top:339.73px;font-size:7.2px;color:#111;transform:scaleX(0.81);transform-origin:0 0;-webkit-text-stroke:0.12px #333">LXCOED434-PC25.MP3</div><div class="t" style="left:313.5px;top:340.33px;font-size:7px;color:#6d6d6d;transform:scaleX(0.9);transform-origin:0 0;">9/9</div><div style="left:175.0px;top:349.3px;width:148.5px;height:10.3px;background:linear-gradient(#f4f4f4,#e0e0e0);border:1px solid #d8d8d8;border-radius:2px"></div><svg style="position:absolute;left:177.8px;top:349.5px" width="9" height="10" viewBox="0 0 9 10"><use href="#mp3s"/></svg><div class="t" style="left:187.5px;top:350.90000000000003px;font-size:7.2px;color:#111;transform:scaleX(0.81);transform-origin:0 0;-webkit-text-stroke:0.12px #333">LXCOED434-PC27.MP3</div><div class="t" style="left:313.5px;top:351.5px;font-size:7px;color:#6d6d6d;transform:scaleX(0.9);transform-origin:0 0;">9/9</div><div style="left:175.0px;top:360.47px;width:148.5px;height:10.3px;background:linear-gradient(#f4f4f4,#e0e0e0);border:1px solid #d8d8d8;border-radius:2px"></div><svg style="position:absolute;left:177.8px;top:360.67px" width="9" height="10" viewBox="0 0 9 10"><use href="#mp3s"/></svg><div class="t" style="left:187.5px;top:362.07000000000005px;font-size:7.2px;color:#111;transform:scaleX(0.81);transform-origin:0 0;-webkit-text-stroke:0.12px #333">LXCOED434-PC28.MP3</div><div class="t" style="left:313.5px;top:362.67px;font-size:7px;color:#6d6d6d;transform:scaleX(0.9);transform-origin:0 0;">9/9</div><div style="left:175.0px;top:371.64px;width:148.5px;height:10.3px;background:linear-gradient(#f4f4f4,#e0e0e0);border:1px solid #d8d8d8;border-radius:2px"></div><svg style="position:absolute;left:177.8px;top:371.84px" width="9" height="10" viewBox="0 0 9 10"><use href="#mp3s"/></svg><div class="t" style="left:187.5px;top:373.24px;font-size:7.2px;color:#111;transform:scaleX(0.81);transform-origin:0 0;-webkit-text-stroke:0.12px #333">LXCOED434-PC29.MP3</div><div class="t" style="left:313.5px;top:373.84px;font-size:7px;color:#6d6d6d;transform:scaleX(0.9);transform-origin:0 0;">9/9</div><div style="left:175.0px;top:382.81px;width:148.5px;height:10.3px;background:linear-gradient(#f4f4f4,#e0e0e0);border:1px solid #d8d8d8;border-radius:2px"></div><svg style="position:absolute;left:177.8px;top:383.01px" width="9" height="10" viewBox="0 0 9 10"><use href="#mp3s"/></svg><div class="t" style="left:187.5px;top:384.41px;font-size:7.2px;color:#111;transform:scaleX(0.81);transform-origin:0 0;-webkit-text-stroke:0.12px #333">LXCOED434-PC30.MP3</div><div class="t" style="left:313.5px;top:385.01px;font-size:7px;color:#6d6d6d;transform:scaleX(0.9);transform-origin:0 0;">9/9</div><div style="left:175.0px;top:393.98px;width:148.5px;height:10.3px;background:linear-gradient(#f4f4f4,#e0e0e0);border:1px solid #d8d8d8;border-radius:2px"></div><svg style="position:absolute;left:177.8px;top:394.18px" width="9" height="10" viewBox="0 0 9 10"><use href="#mp3s"/></svg><div class="t" style="left:187.5px;top:395.58000000000004px;font-size:7.2px;color:#111;transform:scaleX(0.81);transform-origin:0 0;-webkit-text-stroke:0.12px #333">LXCOED434-PC31.MP3</div><div class="t" style="left:313.5px;top:396.18px;font-size:7px;color:#6d6d6d;transform:scaleX(0.9);transform-origin:0 0;">9/9</div><div style="left:175.0px;top:405.15px;width:148.5px;height:10.3px;background:linear-gradient(#f4f4f4,#e0e0e0);border:1px solid #d8d8d8;border-radius:2px"></div><svg style="position:absolute;left:177.8px;top:405.34999999999997px" width="9" height="10" viewBox="0 0 9 10"><use href="#mp3s"/></svg><div class="t" style="left:187.5px;top:406.75px;font-size:7.2px;color:#111;transform:scaleX(0.81);transform-origin:0 0;-webkit-text-stroke:0.12px #333">LXCOED434-PC33.MP3</div><div class="t" style="left:313.5px;top:407.34999999999997px;font-size:7px;color:#6d6d6d;transform:scaleX(0.9);transform-origin:0 0;">9/9</div><div style="left:175.0px;top:416.32px;width:148.5px;height:10.3px;background:linear-gradient(#f4f4f4,#e0e0e0);border:1px solid #d8d8d8;border-radius:2px"></div><svg style="position:absolute;left:177.8px;top:416.52px" width="9" height="10" viewBox="0 0 9 10"><use href="#mp3s"/></svg><div class="t" style="left:187.5px;top:417.92px;font-size:7.2px;color:#111;transform:scaleX(0.81);transform-origin:0 0;-webkit-text-stroke:0.12px #333">LXCOED434-PC34.MP3</div><div class="t" style="left:313.5px;top:418.52px;font-size:7px;color:#6d6d6d;transform:scaleX(0.9);transform-origin:0 0;">9/9</div><div style="left:175.0px;top:427.49px;width:148.5px;height:10.3px;background:linear-gradient(#f4f4f4,#e0e0e0);border:1px solid #d8d8d8;border-radius:2px"></div><svg style="position:absolute;left:177.8px;top:427.69px" width="9" height="10" viewBox="0 0 9 10"><use href="#mp3s"/></svg><div class="t" style="left:187.5px;top:429.09000000000003px;font-size:7.2px;color:#111;transform:scaleX(0.81);transform-origin:0 0;-webkit-text-stroke:0.12px #333">LXCOED434-PC35.MP3</div><div class="t" style="left:313.5px;top:429.69px;font-size:7px;color:#6d6d6d;transform:scaleX(0.9);transform-origin:0 0;">9/9</div><div style="left:175.0px;top:438.65999999999997px;width:148.5px;height:10.3px;background:linear-gradient(#f4f4f4,#e0e0e0);border:1px solid #d8d8d8;border-radius:2px"></div><svg style="position:absolute;left:177.8px;top:438.85999999999996px" width="9" height="10" viewBox="0 0 9 10"><use href="#mp3s"/></svg><div class="t" style="left:187.5px;top:440.26px;font-size:7.2px;color:#111;transform:scaleX(0.81);transform-origin:0 0;-webkit-text-stroke:0.12px #333">LXCOED434-PC36.MP3</div><div class="t" style="left:313.5px;top:440.85999999999996px;font-size:7px;color:#6d6d6d;transform:scaleX(0.9);transform-origin:0 0;">9/9</div></div></div><div style="left:167.0px;top:470px;width:152.5px;height:9px;background:#ececec"></div><svg style="position:absolute;left:170.0px;top:472.5px" width="3" height="5"><path d="M3 0V5L0 2.5Z" fill="#333"/></svg><svg style="position:absolute;left:313.5px;top:472.5px" width="3" height="5"><path d="M0 0V5L3 2.5Z" fill="#333"/></svg><div class="thumbh" style="left:176px;top:470.5px;width:64px;height:8px;"></div><div style="left:206.0px;top:473px;width:4px;height:3px;border-left:1px solid #888;border-right:1px solid #888"></div><div class="dp" style="left:18.0px;top:479px;width:301.5px;height:28px;"></div><svg style="position:absolute;left:30px;top:483px" width="19" height="23" viewBox="0 0 19 23"><path d="M1.5 1.5H12.5L17.5 6.5V21.5H1.5Z" fill="#f4f4f4" stroke="#b4b8bc" stroke-width="1"/><path d="M12.5 1.5V6.5H17.5" fill="#e0e0e0" stroke="#b4b8bc" stroke-width="0.8"/><path d="M10.5 5.5V13.5" stroke="#1f7fd8" stroke-width="1.4"/><path d="M10.5 5.5Q13.5 7 12.8 9.5" stroke="#1f7fd8" stroke-width="1" fill="none"/><ellipse cx="8.4" cy="13.6" rx="2.6" ry="2" fill="#1f7fd8"/><text x="9.5" y="20" font-size="4" font-family="Liberation Sans" font-weight="bold" text-anchor="middle" fill="#444">MP3</text></svg><div class="t" style="left:60px;top:484.5px;font-size:7px;color:#1e395b;transform:scaleX(0.97);transform-origin:0 0;">19 items selected</div><div class="t" style="left:60px;top:494px;font-size:7px;color:#3366b0;transform:scaleX(0.88);transform-origin:0 0;">Show more details...</div>
<div style="left:343px;top:163px;width:164px;height:374px;background:linear-gradient(160deg,rgba(38,38,38,0.93) 0%,rgba(29,29,29,0.93) 40%,rgba(42,42,42,0.93) 70%,rgba(28,28,28,0.93) 100%);backdrop-filter:blur(3px);border:1px solid #111;border-radius:3px;box-shadow:0 0 5px rgba(0,0,0,0.5)"></div><svg style="position:absolute;left:352.5px;top:175.8px" width="8" height="10" viewBox="0 0 8 10"><use href="#fsm"/></svg><div class="t" style="left:363px;top:176.70000000000002px;font-size:7.3px;color:#f4f4f4;transform:scaleX(0.86);transform-origin:0 0;-webkit-text-stroke:0.1px #ddd">fren3207 - Shortcut</div><svg style="position:absolute;left:352.5px;top:192.78px" width="8" height="10" viewBox="0 0 8 10"><use href="#fsm"/></svg><div class="t" style="left:363px;top:193.68px;font-size:7.3px;color:#f4f4f4;transform:scaleX(0.86);transform-origin:0 0;-webkit-text-stroke:0.1px #ddd">SANAKO - Shortcut</div><svg style="position:absolute;left:352.5px;top:209.76000000000002px" width="8" height="10" viewBox="0 0 8 10"><use href="#fsm"/></svg><div class="t" style="left:363px;top:210.66000000000003px;font-size:7.3px;color:#f4f4f4;transform:scaleX(0.86);transform-origin:0 0;-webkit-text-stroke:0.1px #ddd">9-9-2013_9-55-52_AM</div><div style="left:347px;top:222.74px;width:155.5px;height:17.5px;background:linear-gradient(#4e5154,#45484b);border:1px solid #5c5f62;border-radius:3px"></div><div style="left:490.5px;top:227.74px;width:7px;height:7px;background:#c86060;border:1px solid #e8a0a0"></div><div class="t" style="left:491.5px;top:227.24px;font:bold 7px Liberation Sans,sans-serif;color:#fff">&#215;</div><svg style="position:absolute;left:352.5px;top:226.74px" width="8" height="10" viewBox="0 0 8 10"><use href="#fsm"/></svg><div class="t" style="left:363px;top:227.64000000000001px;font-size:7.3px;color:#f4f4f4;transform:scaleX(0.86);transform-origin:0 0;-webkit-text-stroke:0.1px #ddd">9-9-2013_9-55-52_AM</div><svg style="position:absolute;left:352.5px;top:243.72000000000003px" width="8" height="10" viewBox="0 0 8 10"><use href="#fsm"/></svg><div class="t" style="left:363px;top:244.62000000000003px;font-size:7.3px;color:#f4f4f4;transform:scaleX(0.86);transform-origin:0 0;-webkit-text-stroke:0.1px #ddd">9-9-2013_9-55-52_AM</div><svg style="position:absolute;left:352.5px;top:260.70000000000005px" width="8" height="10" viewBox="0 0 8 10"><use href="#fsm"/></svg><div class="t" style="left:363px;top:261.6px;font-size:7.3px;color:#f4f4f4;transform:scaleX(0.86);transform-origin:0 0;-webkit-text-stroke:0.1px #ddd">9-9-2013_9-55-52_AM</div><svg style="position:absolute;left:352.5px;top:277.68px" width="8" height="10" viewBox="0 0 8 10"><use href="#fsm"/></svg><div class="t" style="left:363px;top:278.58px;font-size:7.3px;color:#f4f4f4;transform:scaleX(0.86);transform-origin:0 0;-webkit-text-stroke:0.1px #ddd">9-9-2013_9-55-52_AM</div><svg style="position:absolute;left:352.5px;top:294.66px" width="8" height="10" viewBox="0 0 8 10"><use href="#fsm"/></svg><div class="t" style="left:363px;top:295.56px;font-size:7.3px;color:#f4f4f4;transform:scaleX(0.86);transform-origin:0 0;-webkit-text-stroke:0.1px #ddd">9-9-2013_9-55-52_AM</div><svg style="position:absolute;left:352.5px;top:311.64px" width="8" height="10" viewBox="0 0 8 10"><use href="#fsm"/></svg><div class="t" style="left:363px;top:312.53999999999996px;font-size:7.3px;color:#f4f4f4;transform:scaleX(0.86);transform-origin:0 0;-webkit-text-stroke:0.1px #ddd">9-9-2013_9-55-52_AM</div><svg style="position:absolute;left:352.5px;top:328.62px" width="8" height="10" viewBox="0 0 8 10"><use href="#fsm"/></svg><div class="t" style="left:363px;top:329.52px;font-size:7.3px;color:#f4f4f4;transform:scaleX(0.86);transform-origin:0 0;-webkit-text-stroke:0.1px #ddd">9-9-2013_9-55-52_AM</div><svg style="position:absolute;left:352.5px;top:345.6px" width="8" height="10" viewBox="0 0 8 10"><use href="#fsm"/></svg><div class="t" style="left:363px;top:346.5px;font-size:7.3px;color:#f4f4f4;transform:scaleX(0.86);transform-origin:0 0;-webkit-text-stroke:0.1px #ddd">9-9-2013_9-55-52_AM</div><svg style="position:absolute;left:352.5px;top:362.58000000000004px" width="8" height="10" viewBox="0 0 8 10"><use href="#fsm"/></svg><div class="t" style="left:363px;top:363.48px;font-size:7.3px;color:#f4f4f4;transform:scaleX(0.86);transform-origin:0 0;-webkit-text-stroke:0.1px #ddd">9-9-2013_9-55-52_AM</div><svg style="position:absolute;left:352.5px;top:379.56px" width="8" height="10" viewBox="0 0 8 10"><use href="#fsm"/></svg><div class="t" style="left:363px;top:380.46px;font-size:7.3px;color:#f4f4f4;transform:scaleX(0.86);transform-origin:0 0;-webkit-text-stroke:0.1px #ddd">9-9-2013_9-55-52_AM</div><svg style="position:absolute;left:352.5px;top:396.54px" width="8" height="10" viewBox="0 0 8 10"><use href="#fsm"/></svg><div class="t" style="left:363px;top:397.44px;font-size:7.3px;color:#f4f4f4;transform:scaleX(0.86);transform-origin:0 0;-webkit-text-stroke:0.1px #ddd">9-9-2013_9-55-52_AM</div><svg style="position:absolute;left:352.5px;top:413.52px" width="8" height="10" viewBox="0 0 8 10"><use href="#fsm"/></svg><div class="t" style="left:363px;top:414.41999999999996px;font-size:7.3px;color:#f4f4f4;transform:scaleX(0.86);transform-origin:0 0;-webkit-text-stroke:0.1px #ddd">9-9-2013_9-55-52_AM</div><svg style="position:absolute;left:352.5px;top:430.5px" width="8" height="10" viewBox="0 0 8 10"><use href="#fsm"/></svg><div class="t" style="left:363px;top:431.4px;font-size:7.3px;color:#f4f4f4;transform:scaleX(0.86);transform-origin:0 0;-webkit-text-stroke:0.1px #ddd">9-9-2013_9-55-52_AM</div><svg style="position:absolute;left:352.5px;top:447.48px" width="8" height="10" viewBox="0 0 8 10"><use href="#fsm"/></svg><div class="t" style="left:363px;top:448.38px;font-size:7.3px;color:#f4f4f4;transform:scaleX(0.86);transform-origin:0 0;-webkit-text-stroke:0.1px #ddd">9-9-2013_9-55-52_AM</div><div style="left:347px;top:460.46000000000004px;width:155.5px;height:17.5px;background:linear-gradient(90deg,#3f5f88,#4c6c96 70%,#3a5a82);border:1px solid #7a96b8;border-radius:3px"></div><svg style="position:absolute;left:352.5px;top:464.46000000000004px" width="8" height="10" viewBox="0 0 8 10"><use href="#fsm"/></svg><div class="t" style="left:363px;top:465.36px;font-size:7.3px;color:#f4f4f4;transform:scaleX(0.86);transform-origin:0 0;-webkit-text-stroke:0.1px #ddd">9-9-2013_9-55-52_AM</div><svg style="position:absolute;left:352.5px;top:481.44px" width="8" height="10" viewBox="0 0 8 10"><use href="#fsm"/></svg><div class="t" style="left:363px;top:482.34px;font-size:7.3px;color:#f4f4f4;transform:scaleX(0.86);transform-origin:0 0;-webkit-text-stroke:0.1px #ddd">9-9-2013_9-59-27_AMtest</div><svg style="position:absolute;left:352.5px;top:498.42px" width="8" height="10" viewBox="0 0 8 10"><use href="#fsm"/></svg><div class="t" style="left:363px;top:499.32px;font-size:7.3px;color:#f4f4f4;transform:scaleX(0.86);transform-origin:0 0;-webkit-text-stroke:0.1px #ddd">9-9-2013_10-05-54_AMlec0n3</div><svg style="position:absolute;left:352.5px;top:515.4000000000001px" width="8" height="10" viewBox="0 0 8 10"><use href="#fsm"/></svg><div class="t" style="left:363px;top:516.3000000000001px;font-size:7.3px;color:#f4f4f4;transform:scaleX(0.86);transform-origin:0 0;-webkit-text-stroke:0.1px #ddd">9-9-2013_10-08-23_AMlecon 3 with names</div>
<div class="frm" style="left:732px;top:165.5px;width:265px;height:341px;background:linear-gradient(rgba(108,112,120,0.5),rgba(114,118,124,0.52) 48px,#a6a6a6 48px,#a2a2a2);border:1px solid rgba(70,70,70,0.55);box-shadow:0 0 4px rgba(0,0,0,0.3);backdrop-filter:blur(2px)"></div><div style="left:938.5px;top:166.0px;width:54.5px;height:10px;border:1px solid rgba(80,80,80,0.45);border-top:none;border-radius:0 0 3px 3px;background:linear-gradient(rgba(225,225,225,0.4),rgba(190,190,190,0.3))"></div><div style="left:952.5px;top:166.0px;width:1px;height:9.5px;background:rgba(80,80,80,0.35)"></div><div style="left:967.5px;top:166.0px;width:1px;height:9.5px;background:rgba(80,80,80,0.35)"></div><div style="left:942.5px;top:170.5px;width:6.5px;height:2.5px;background:#f0f0f0;border:0.7px solid #6a6a6a;border-radius:1.2px"></div><div style="left:956.5px;top:168.0px;width:7px;height:6.5px;background:#e8e8e8;border:0.8px solid #6a6a6a;border-radius:2.5px"></div><div style="left:958.5px;top:170.3px;width:3px;height:1.5px;background:#888"></div><svg style="position:absolute;left:977.0px;top:167.8px" width="8" height="7" viewBox="0 0 8 7"><path d="M1.2 0.8L6.8 6.2M6.8 0.8L1.2 6.2" stroke="#6a6a6a" stroke-width="2.4"/><path d="M1.2 0.8L6.8 6.2M6.8 0.8L1.2 6.2" stroke="#eeeeee" stroke-width="1.1"/></svg><div class="nv" style="left:737.5px;top:183.5px;width:13px;height:13px;"></div><div class="nv" style="left:752.5px;top:183.5px;width:13px;height:13px;"></div><svg style="position:absolute;left:740.5px;top:187.0px" width="7" height="6"><path d="M6 3H1M3.5 0.5L1 3L3.5 5.5" stroke="#aab" stroke-width="1.2" fill="none"/></svg><svg style="position:absolute;left:755.5px;top:187.0px" width="7" height="6"><path d="M1 3H6M3.5 0.5L6 3L3.5 5.5" stroke="#aab" stroke-width="1.2" fill="none"/></svg><svg style="position:absolute;left:767px;top:189.5px" width="4" height="3"><path d="M0 0H4L2 2.5Z" fill="#ccc"/></svg><div class="adr" style="left:773px;top:184.0px;width:74px;height:11.5px;"></div><svg style="position:absolute;left:775px;top:185.5px" width="8" height="10" viewBox="0 0 8 10"><use href="#fsm"/></svg><div style="left:784px;top:184.5px;width:51px;height:10px;overflow:hidden"><div class="t" style="left:-35.5px;top:2.2px;font-size:6.5px;color:#555;transform:scaleX(1);transform-origin:0 0;">&#171;</div><div class="t" style="left:-27.5px;top:2px;font-size:7px;color:#333;transform:scaleX(0.9);transform-origin:0 0;">stud...</div><svg style="position:absolute;left:-6px;top:4px" width="3" height="5"><path d="M0 0V5L3 2.5Z" fill="#111"/></svg><div class="t" style="left:0.5px;top:2px;font-size:7px;color:#333;transform:scaleX(0.9);transform-origin:0 0;">9-9-2013_10-...</div></div><svg style="position:absolute;left:838px;top:188.5px" width="5" height="3"><path d="M0 0H5L2.5 3Z" fill="#1a2a6a"/></svg><div class="adr" style="left:847px;top:184.0px;width:13px;height:11.5px;"></div><svg style="position:absolute;left:850px;top:186.0px" width="8" height="7" viewBox="0 0 8 7"><path d="M0.5 3 Q2 0.5 5 1.5 M5 0.3 L5.5 2 L3.8 2.3 M7.5 4 Q6 6.5 3 5.5 M3 6.7 L2.5 5 L4.2 4.7" stroke="#2a6ac8" stroke-width="1" fill="none"/></svg><div class="srch" style="left:865px;top:184.0px;width:126.5px;height:11.5px;"></div><div class="t" style="left:868px;top:186.5px;font-size:7px;color:#8a8a8a;transform:scaleX(0.86);transform-origin:0 0;font-style:italic">Search 9-9-2013_10-08-23_AMlecon 3 ...</div><svg style="position:absolute;left:981.5px;top:186.0px" width="8" height="8" viewBox="0 0 8 8"><circle cx="4.8" cy="3.2" r="2.4" fill="none" stroke="#2a5ab8" stroke-width="1.1"/><path d="M3.2 4.8L0.8 7.2" stroke="#2a5ab8" stroke-width="1.4"/></svg><div class="tb" style="left:736.5px;top:200.0px;width:256.0px;height:16px;"></div><div class="t" style="left:746.5px;top:204.5px;font-size:7px;color:#1e395b;transform:scaleX(0.87);transform-origin:0 0;">Organize</div><svg style="position:absolute;left:772.5px;top:207.0px" width="5" height="3"><path d="M0 0H5L2.5 3Z" fill="#1e395b"/></svg><div class="t" style="left:794.5px;top:204.5px;font-size:7px;color:#1e395b;transform:scaleX(0.9);transform-origin:0 0;">Burn</div><div class="t" style="left:823.5px;top:204.5px;font-size:7px;color:#1e395b;transform:scaleX(0.92);transform-origin:0 0;">New folder</div><svg style="position:absolute;left:927.5px;top:204.0px" width="10" height="9" viewBox="0 0 10 9"><path d="M0 1H2M3 1H9M0 4H2M3 4H9M0 7H2M3 7H9" stroke="#6a7a8a" stroke-width="1"/></svg><svg style="position:absolute;left:941.5px;top:207.0px" width="5" height="3"><path d="M0 0H5L2.5 3Z" fill="#1e2e4e"/></svg><div style="left:956.5px;top:203.5px;width:10px;height:9px;background:linear-gradient(90deg,#fff 55%,#8fc0e8 55%);border:1px solid #6f8aa8"></div><div style="left:976.5px;top:203.0px;width:9px;height:9px;background:radial-gradient(circle at 40% 35%,#5a8ad8,#1a3a8a);border-radius:50%"></div><div class="t" style="left:979.0px;top:204.5px;font:bold 6.5px Liberation Sans,sans-serif;color:#fff">?</div><div style="left:736.5px;top:216.0px;width:256.0px;height:257.5px;background:#fff"></div><div style="left:829.0px;top:216.0px;width:9px;height:257.5px;background:#ededed"></div><svg style="position:absolute;left:831.0px;top:220.0px" width="5" height="3"><path d="M0 3H5L2.5 0Z" fill="#222"/></svg><svg style="position:absolute;left:831.0px;top:465.5px" width="5" height="3"><path d="M0 0H5L2.5 3Z" fill="#222"/></svg><div class="thumb" style="left:829.5px;top:303.5px;width:8px;height:83px;"></div><div style="left:831.5px;top:343.0px;width:4px;height:4.5px;border-top:1px solid #9a9a9a;border-bottom:1px solid #9a9a9a;background:linear-gradient(transparent 35%,#9a9a9a 35%,#9a9a9a 65%,transparent 65%)"></div><div style="left:838.0px;top:216.0px;width:1px;height:257.5px;background:#f4f4f4"></div><div style="left:736.5px;top:216.0px;width:92.5px;height:257.5px;overflow:hidden"><div style="left:-736.5px;top:-216.0px;width:1024px;height:563px"><svg style="position:absolute;left:718.0px;top:228.1px" width="8" height="10" viewBox="0 0 8 10"><use href="#fsm"/></svg><div class="t" style="left:729.3px;top:229.2px;font-size:7.2px;color:#161616;transform:scaleX(0.88);transform-origin:0 0;-webkit-text-stroke:0.12px #333">BCOB</div><svg style="position:absolute;left:718.0px;top:239.23px" width="8" height="10" viewBox="0 0 8 10"><use href="#fsm"/></svg><div class="t" style="left:729.3px;top:240.32999999999998px;font-size:7.2px;color:#161616;transform:scaleX(0.88);transform-origin:0 0;-webkit-text-stroke:0.12px #333">Campus Merchants</div><svg style="position:absolute;left:718.0px;top:250.35999999999999px" width="8" height="10" viewBox="0 0 8 10"><use href="#fsm"/></svg><div class="t" style="left:729.3px;top:251.45999999999998px;font-size:7.2px;color:#161616;transform:scaleX(0.88);transform-origin:0 0;-webkit-text-stroke:0.12px #333">COAS</div><svg style="position:absolute;left:723.2px;top:261.49px" width="8" height="10" viewBox="0 0 8 10"><use href="#fsm"/></svg><div class="t" style="left:734.5px;top:262.59000000000003px;font-size:7.2px;color:#161616;transform:scaleX(0.88);transform-origin:0 0;-webkit-text-stroke:0.12px #333">COMM</div><svg style="position:absolute;left:723.2px;top:272.62px" width="8" height="10" viewBox="0 0 8 10"><use href="#fsm"/></svg><div class="t" style="left:734.5px;top:273.72px;font-size:7.2px;color:#161616;transform:scaleX(0.88);transform-origin:0 0;-webkit-text-stroke:0.12px #333">GEES</div><svg style="position:absolute;left:723.2px;top:283.75px" width="8" height="10" viewBox="0 0 8 10"><use href="#fsm"/></svg><div class="t" style="left:734.5px;top:284.85px;font-size:7.2px;color:#161616;transform:scaleX(0.88);transform-origin:0 0;-webkit-text-stroke:0.12px #333">LCS</div><svg style="position:absolute;left:728.4px;top:294.88px" width="8" height="10" viewBox="0 0 8 10"><use href="#fsm"/></svg><div class="t" style="left:739.6999999999999px;top:295.98px;font-size:7.2px;color:#161616;transform:scaleX(0.88);transform-origin:0 0;-webkit-text-stroke:0.12px #333">LABS</div><svg style="position:absolute;left:728.4px;top:306.01px" width="8" height="10" viewBox="0 0 8 10"><use href="#fsm"/></svg><div class="t" style="left:739.6999999999999px;top:307.11px;font-size:7.2px;color:#161616;transform:scaleX(0.88);transform-origin:0 0;-webkit-text-stroke:0.12px #333">LRC</div><svg style="position:absolute;left:733.6px;top:317.14px" width="8" height="10" viewBox="0 0 8 10"><use href="#fsm"/></svg><div class="t" style="left:744.9px;top:318.24px;font-size:7.2px;color:#161616;transform:scaleX(0.88);transform-origin:0 0;-webkit-text-stroke:0.12px #333">DVDRegionFree</div><svg style="position:absolute;left:733.6px;top:328.27px" width="8" height="10" viewBox="0 0 8 10"><use href="#fsm"/></svg><div class="t" style="left:744.9px;top:329.37px;font-size:7.2px;color:#161616;transform:scaleX(0.88);transform-origin:0 0;-webkit-text-stroke:0.12px #333">IPA12US</div><svg style="position:absolute;left:733.6px;top:339.4px" width="8" height="10" viewBox="0 0 8 10"><use href="#fsm"/></svg><div class="t" style="left:744.9px;top:340.5px;font-size:7.2px;color:#161616;transform:scaleX(0.88);transform-origin:0 0;-webkit-text-stroke:0.12px #333">media</div><svg style="position:absolute;left:733.6px;top:350.53px" width="8" height="10" viewBox="0 0 8 10"><use href="#fsm"/></svg><div class="t" style="left:744.9px;top:351.63px;font-size:7.2px;color:#161616;transform:scaleX(0.88);transform-origin:0 0;-webkit-text-stroke:0.12px #333">misc</div><svg style="position:absolute;left:733.6px;top:361.65999999999997px" width="8" height="10" viewBox="0 0 8 10"><use href="#fsm"/></svg><div class="t" style="left:744.9px;top:362.76px;font-size:7.2px;color:#161616;transform:scaleX(0.88);transform-origin:0 0;-webkit-text-stroke:0.12px #333">sanako</div><svg style="position:absolute;left:738.8px;top:372.78999999999996px" width="8" height="10" viewBox="0 0 8 10"><use href="#fsm"/></svg><div class="t" style="left:750.0999999999999px;top:373.89px;font-size:7.2px;color:#161616;transform:scaleX(0.88);transform-origin:0 0;-webkit-text-stroke:0.12px #333">application</div><svg style="position:absolute;left:738.8px;top:383.92px" width="8" height="10" viewBox="0 0 8 10"><use href="#fsm"/></svg><div class="t" style="left:750.0999999999999px;top:385.02000000000004px;font-size:7.2px;color:#161616;transform:scaleX(0.88);transform-origin:0 0;-webkit-text-stroke:0.12px #333">document</div><svg style="position:absolute;left:738.8px;top:395.05px" width="8" height="10" viewBox="0 0 8 10"><use href="#fsm"/></svg><div class="t" style="left:750.0999999999999px;top:396.15000000000003px;font-size:7.2px;color:#161616;transform:scaleX(0.88);transform-origin:0 0;-webkit-text-stroke:0.12px #333">examresult</div><svg style="position:absolute;left:738.8px;top:406.18px" width="8" height="10" viewBox="0 0 8 10"><use href="#fsm"/></svg><div class="t" style="left:750.0999999999999px;top:407.28000000000003px;font-size:7.2px;color:#161616;transform:scaleX(0.88);transform-origin:0 0;-webkit-text-stroke:0.12px #333">examtest</div><svg style="position:absolute;left:738.8px;top:417.31px" width="8" height="10" viewBox="0 0 8 10"><use href="#fsm"/></svg><div class="t" style="left:750.0999999999999px;top:418.41px;font-size:7.2px;color:#161616;transform:scaleX(0.88);transform-origin:0 0;-webkit-text-stroke:0.12px #333">media</div><svg style="position:absolute;left:738.8px;top:428.44px" width="8" height="10" viewBox="0 0 8 10"><use href="#fsm"/></svg><div class="t" style="left:750.0999999999999px;top:429.54px;font-size:7.2px;color:#161616;transform:scaleX(0.88);transform-origin:0 0;-webkit-text-stroke:0.12px #333">policy</div><svg style="position:absolute;left:738.8px;top:439.57000000000005px" width="8" height="10" viewBox="0 0 8 10"><use href="#fsm"/></svg><div class="t" style="left:750.0999999999999px;top:440.6700000000001px;font-size:7.2px;color:#161616;transform:scaleX(0.88);transform-origin:0 0;-webkit-text-stroke:0.12px #333">session</div><svg style="position:absolute;left:738.8px;top:450.70000000000005px" width="8" height="10" viewBox="0 0 8 10"><use href="#fsm"/></svg><div class="t" style="left:750.0999999999999px;top:451.80000000000007px;font-size:7.2px;color:#161616;transform:scaleX(0.88);transform-origin:0 0;-webkit-text-stroke:0.12px #333">student</div><div style="left:736.5px;top:461.33000000000004px;width:92.5px;height:10.5px;background:linear-gradient(#f0f0f0,#dcdcdc);border-top:1px solid #e0e0e0"></div><svg style="position:absolute;left:744.0px;top:461.83000000000004px" width="8" height="10" viewBox="0 0 8 10"><use href="#fsm"/></svg><div class="t" style="left:755.3px;top:462.93000000000006px;font-size:7.2px;color:#161616;transform:scaleX(0.88);transform-origin:0 0;-webkit-text-stroke:0.12px #333">9-9-2013_10-08-23_AMlecon 3 with names</div><svg style="position:absolute;left:738.8px;top:472.96000000000004px" width="8" height="10" viewBox="0 0 8 10"><use href="#fsm"/></svg><div class="t" style="left:750.0999999999999px;top:474.06000000000006px;font-size:7.2px;color:#161616;transform:scaleX(0.88);transform-origin:0 0;-webkit-text-stroke:0.12px #333">teacher</div></div></div><div class="t" style="left:848.0px;top:219.5px;font-size:7px;color:#4d6185;transform:scaleX(0.9);transform-origin:0 0;">Name</div><svg style="position:absolute;left:909.0px;top:217.0px" width="5" height="3"><path d="M0 3H5L2.5 0Z" fill="#6a8ab0"/></svg><div style="left:982.5px;top:216.0px;width:1px;height:12px;background:#e6e6e6"></div><div class="t" style="left:985.5px;top:219.5px;font-size:7px;color:#4d6185;transform:scaleX(0.9);transform-origin:0 0;">D</div><div style="left:839.0px;top:228.0px;width:153.5px;height:245.5px;overflow:hidden"><div style="left:-839.0px;top:-228.0px;width:1024px;height:563px"><svg style="position:absolute;left:849.8px;top:233.6px" width="9" height="10" viewBox="0 0 9 10"><use href="#mp3s"/></svg><div class="t" style="left:859.5px;top:235.0px;font-size:7.2px;color:#111;transform:scaleX(0.81);transform-origin:0 0;-webkit-text-stroke:0.12px #333">bmabee2.MP3</div><div class="t" style="left:985.5px;top:235.6px;font-size:7px;color:#6d6d6d;transform:scaleX(0.9);transform-origin:0 0;">9/9</div><svg style="position:absolute;left:849.8px;top:244.72px" width="9" height="10" viewBox="0 0 9 10"><use href="#mp3s"/></svg><div class="t" style="left:859.5px;top:246.12px;font-size:7.2px;color:#111;transform:scaleX(0.81);transform-origin:0 0;-webkit-text-stroke:0.12px #333">creyno20.MP3</div><div class="t" style="left:985.5px;top:246.72px;font-size:7px;color:#6d6d6d;transform:scaleX(0.9);transform-origin:0 0;">9/9</div><svg style="position:absolute;left:849.8px;top:255.83999999999997px" width="9" height="10" viewBox="0 0 9 10"><use href="#mp3s"/></svg><div class="t" style="left:859.5px;top:257.24px;font-size:7.2px;color:#111;transform:scaleX(0.81);transform-origin:0 0;-webkit-text-stroke:0.12px #333">ctenny.MP3</div><div class="t" style="left:985.5px;top:257.84px;font-size:7px;color:#6d6d6d;transform:scaleX(0.9);transform-origin:0 0;">9/9</div><svg style="position:absolute;left:849.8px;top:266.96px" width="9" height="10" viewBox="0 0 9 10"><use href="#mp3s"/></svg><div class="t" style="left:859.5px;top:268.36px;font-size:7.2px;color:#111;transform:scaleX(0.81);transform-origin:0 0;-webkit-text-stroke:0.12px #333">dmerrif1.MP3</div><div class="t" style="left:985.5px;top:268.96px;font-size:7px;color:#6d6d6d;transform:scaleX(0.9);transform-origin:0 0;">9/9</div><svg style="position:absolute;left:849.8px;top:278.08px" width="9" height="10" viewBox="0 0 9 10"><use href="#mp3s"/></svg><div class="t" style="left:859.5px;top:279.48px;font-size:7.2px;color:#111;transform:scaleX(0.81);transform-origin:0 0;-webkit-text-stroke:0.12px #333">dsmit317.MP3</div><div class="t" style="left:985.5px;top:280.08px;font-size:7px;color:#6d6d6d;transform:scaleX(0.9);transform-origin:0 0;">9/9</div><svg style="position:absolute;left:849.8px;top:289.2px" width="9" height="10" viewBox="0 0 9 10"><use href="#mp3s"/></svg><div class="t" style="left:859.5px;top:290.6px;font-size:7.2px;color:#111;transform:scaleX(0.81);transform-origin:0 0;-webkit-text-stroke:0.12px #333">eharbaug.MP3</div><div class="t" style="left:985.5px;top:291.2px;font-size:7px;color:#6d6d6d;transform:scaleX(0.9);transform-origin:0 0;">9/9</div><svg style="position:absolute;left:849.8px;top:300.32px" width="9" height="10" viewBox="0 0 9 10"><use href="#mp3s"/></svg><div class="t" style="left:859.5px;top:301.72px;font-size:7.2px;color:#111;transform:scaleX(0.81);transform-origin:0 0;-webkit-text-stroke:0.12px #333">gmenard.MP3</div><div class="t" style="left:985.5px;top:302.32px;font-size:7px;color:#6d6d6d;transform:scaleX(0.9);transform-origin:0 0;">9/9</div><svg style="position:absolute;left:849.8px;top:311.44px" width="9" height="10" viewBox="0 0 9 10"><use href="#mp3s"/></svg><div class="t" style="left:859.5px;top:312.84000000000003px;font-size:7.2px;color:#111;transform:scaleX(0.81);transform-origin:0 0;-webkit-text-stroke:0.12px #333">jdicus.MP3</div><div class="t" style="left:985.5px;top:313.44px;font-size:7px;color:#6d6d6d;transform:scaleX(0.9);transform-origin:0 0;">9/9</div><svg style="position:absolute;left:849.8px;top:322.56px" width="9" height="10" viewBox="0 0 9 10"><use href="#mp3s"/></svg><div class="t" style="left:859.5px;top:323.96000000000004px;font-size:7.2px;color:#111;transform:scaleX(0.81);transform-origin:0 0;-webkit-text-stroke:0.12px #333">mpink2.MP3</div><div class="t" style="left:985.5px;top:324.56px;font-size:7px;color:#6d6d6d;transform:scaleX(0.9);transform-origin:0 0;">9/9</div><svg style="position:absolute;left:849.8px;top:333.68px" width="9" height="10" viewBox="0 0 9 10"><use href="#mp3s"/></svg><div class="t" style="left:859.5px;top:335.08000000000004px;font-size:7.2px;color:#111;transform:scaleX(0.81);transform-origin:0 0;-webkit-text-stroke:0.12px #333">nkungu.MP3</div><div class="t" style="left:985.5px;top:335.68px;font-size:7px;color:#6d6d6d;transform:scaleX(0.9);transform-origin:0 0;">9/9</div><svg style="position:absolute;left:849.8px;top:344.8px" width="9" height="10" viewBox="0 0 9 10"><use href="#mp3s"/></svg><div class="t" style="left:859.5px;top:346.20000000000005px;font-size:7.2px;color:#111;transform:scaleX(0.81);transform-origin:0 0;-webkit-text-stroke:0.12px #333">nshaner.MP3</div><div class="t" style="left:985.5px;top:346.8px;font-size:7px;color:#6d6d6d;transform:scaleX(0.9);transform-origin:0 0;">9/9</div><svg style="position:absolute;left:849.8px;top:355.92px" width="9" height="10" viewBox="0 0 9 10"><use href="#mp3s"/></svg><div class="t" style="left:859.5px;top:357.32000000000005px;font-size:7.2px;color:#111;transform:scaleX(0.81);transform-origin:0 0;-webkit-text-stroke:0.12px #333">slbrown.MP3</div><div class="t" style="left:985.5px;top:357.92px;font-size:7px;color:#6d6d6d;transform:scaleX(0.9);transform-origin:0 0;">9/9</div><svg style="position:absolute;left:849.8px;top:367.04px" width="9" height="10" viewBox="0 0 9 10"><use href="#mp3s"/></svg><div class="t" style="left:859.5px;top:368.44000000000005px;font-size:7.2px;color:#111;transform:scaleX(0.81);transform-origin:0 0;-webkit-text-stroke:0.12px #333">snewman6.MP3</div><div class="t" style="left:985.5px;top:369.04px;font-size:7px;color:#6d6d6d;transform:scaleX(0.9);transform-origin:0 0;">9/9</div><svg style="position:absolute;left:849.8px;top:378.16px" width="9" height="10" viewBox="0 0 9 10"><use href="#mp3s"/></svg><div class="t" style="left:859.5px;top:379.56000000000006px;font-size:7.2px;color:#111;transform:scaleX(0.81);transform-origin:0 0;-webkit-text-stroke:0.12px #333">sodom3.MP3</div><div class="t" style="left:985.5px;top:380.16px;font-size:7px;color:#6d6d6d;transform:scaleX(0.9);transform-origin:0 0;">9/9</div><svg style="position:absolute;left:849.8px;top:389.28px" width="9" height="10" viewBox="0 0 9 10"><use href="#mp3s"/></svg><div class="t" style="left:859.5px;top:390.68px;font-size:7.2px;color:#111;transform:scaleX(0.81);transform-origin:0 0;-webkit-text-stroke:0.12px #333">jday27.MP3</div><div class="t" style="left:985.5px;top:391.28px;font-size:7px;color:#6d6d6d;transform:scaleX(0.9);transform-origin:0 0;">9/9</div><div style="left:847.0px;top:399.7px;width:149.5px;height:11px;background:linear-gradient(#fafafa,#ececec);border:1px solid #e2e2e2;border-radius:2px"></div><svg style="position:absolute;left:849.8px;top:400.4px" width="9" height="10" viewBox="0 0 9 10"><use href="#mp3s"/></svg><div class="t" style="left:859.5px;top:401.8px;font-size:7.2px;color:#111;transform:scaleX(0.81);transform-origin:0 0;-webkit-text-stroke:0.12px #333">mkeita1.MP3</div><div class="t" style="left:985.5px;top:402.4px;font-size:7px;color:#6d6d6d;transform:scaleX(0.9);transform-origin:0 0;">9/9</div><svg style="position:absolute;left:849.8px;top:411.52px" width="9" height="10" viewBox="0 0 9 10"><use href="#mp3s"/></svg><div class="t" style="left:859.5px;top:412.92px;font-size:7.2px;color:#111;transform:scaleX(0.81);transform-origin:0 0;-webkit-text-stroke:0.12px #333">wjones47.MP3</div><div class="t" style="left:985.5px;top:413.52px;font-size:7px;color:#6d6d6d;transform:scaleX(0.9);transform-origin:0 0;">9/9</div><svg style="position:absolute;left:849.8px;top:422.64px" width="9" height="10" viewBox="0 0 9 10"><use href="#mp3s"/></svg><div class="t" style="left:859.5px;top:424.04px;font-size:7.2px;color:#111;transform:scaleX(0.81);transform-origin:0 0;-webkit-text-stroke:0.12px #333">ygao15.MP3</div><div class="t" style="left:985.5px;top:424.64px;font-size:7px;color:#6d6d6d;transform:scaleX(0.9);transform-origin:0 0;">9/9</div></div></div><div style="left:839.0px;top:464.5px;width:153.5px;height:9px;background:#ececec"></div><svg style="position:absolute;left:842.0px;top:467.0px" width="3" height="5"><path d="M3 0V5L0 2.5Z" fill="#333"/></svg><svg style="position:absolute;left:986.5px;top:467.0px" width="3" height="5"><path d="M0 0V5L3 2.5Z" fill="#333"/></svg><div class="thumbh" style="left:848px;top:465.0px;width:65px;height:8px;"></div><div style="left:878.5px;top:467.5px;width:4px;height:3px;border-left:1px solid #888;border-right:1px solid #888"></div><div class="dp" style="left:736.5px;top:473.5px;width:256.0px;height:28.0px;"></div><div class="t" style="left:787px;top:480.5px;font-size:7px;color:#5a6a80;transform:scaleX(0.92);transform-origin:0 0;">Contributing artists:</div><div class="t" style="left:846px;top:480.5px;font-size:7px;color:#1e395b;transform:scaleX(0.92);transform-origin:0 0;">Specify contributing artist</div>
<div class="frm" style="left:530.5px;top:165.5px;width:270px;height:342px;background:linear-gradient(transparent 0,transparent 48px,#4e4e4e 48px,#3c3c3c),linear-gradient(90deg,#5e5e5e 0%,#4a4a4a 14%,#2c2c2c 32%,#303030 44%,#6a6a6a 52%,#7e7e7e 56%,#3a3a3a 68%,#262626 80%,#3a3a3a 100%);border:1px solid #222;box-shadow:0 0 6px 2px rgba(0,0,0,0.45)"></div><div style="left:741.0px;top:166.0px;width:55px;height:10px;border:1px solid #2a2a2a;border-top:none;border-radius:0 0 3px 3px;background:linear-gradient(#b4b4b4,#8c8c8c 45%,#5c5c5c 55%,#787878);box-shadow:0 0 0 0.5px rgba(255,255,255,0.25)"></div><div style="left:770.0px;top:166.0px;width:26px;height:10px;background:linear-gradient(#e8a090,#da6e56 42%,#c02c0c 58%,#d65a3c);border-radius:0 0 3px 0;border:0.5px solid #5a1a0a;border-top:none"></div><div style="left:756.0px;top:166.0px;width:0.8px;height:10px;background:#3a3a3a"></div><div style="left:770.0px;top:166.0px;width:0.8px;height:10px;background:#3a3a3a"></div><div style="left:745.5px;top:170.5px;width:7px;height:3px;background:#fff;box-shadow:0 0 0 0.7px #333;border-radius:1px"></div><div style="left:759.5px;top:168.5px;width:7.5px;height:5.5px;background:#eee;border:0.8px solid #333;border-radius:2px"></div><div style="left:761.3px;top:170.2px;width:4px;height:1.8px;background:#777"></div><svg style="position:absolute;left:779.5px;top:167.8px" width="8" height="7" viewBox="0 0 8 7"><path d="M1.2 0.8L6.8 6.2M6.8 0.8L1.2 6.2" stroke="#4a2a2a" stroke-width="2.6"/><path d="M1.2 0.8L6.8 6.2M6.8 0.8L1.2 6.2" stroke="#ffffff" stroke-width="1.3"/></svg><div class="nv" style="left:536.0px;top:183.5px;width:13px;height:13px;"></div><div class="nv" style="left:551.0px;top:183.5px;width:13px;height:13px;"></div><svg style="position:absolute;left:539.0px;top:187.0px" width="7" height="6"><path d="M6 3H1M3.5 0.5L1 3L3.5 5.5" stroke="#aab" stroke-width="1.2" fill="none"/></svg><svg style="position:absolute;left:554.0px;top:187.0px" width="7" height="6"><path d="M1 3H6M3.5 0.5L6 3L3.5 5.5" stroke="#aab" stroke-width="1.2" fill="none"/></svg><svg style="position:absolute;left:565.5px;top:189.5px" width="4" height="3"><path d="M0 0H4L2 2.5Z" fill="#ccc"/></svg><div class="adr" style="left:571.5px;top:184.0px;width:107px;height:11.5px;background:linear-gradient(#d6d6d6,#cacaca)"></div><svg style="position:absolute;left:573.5px;top:185.5px" width="8" height="10" viewBox="0 0 8 10"><use href="#fsm"/></svg><div style="left:582.5px;top:184.5px;width:84px;height:10px;overflow:hidden"><div class="t" style="left:2.5px;top:2.2px;font-size:6.5px;color:#555;transform:scaleX(1);transform-origin:0 0;">&#171;</div><div class="t" style="left:10.5px;top:2px;font-size:7px;color:#333;transform:scaleX(0.9);transform-origin:0 0;">stud...</div><svg style="position:absolute;left:32px;top:4px" width="3" height="5"><path d="M0 0V5L3 2.5Z" fill="#111"/></svg><div class="t" style="left:38.5px;top:2px;font-size:7px;color:#333;transform:scaleX(0.9);transform-origin:0 0;">9-9-201...</div></div><svg style="position:absolute;left:669.5px;top:188.5px" width="5" height="3"><path d="M0 0H5L2.5 3Z" fill="#1a2a6a"/></svg><div class="adr" style="left:678.5px;top:184.0px;width:13px;height:11.5px;"></div><svg style="position:absolute;left:681.5px;top:186.0px" width="8" height="7" viewBox="0 0 8 7"><path d="M0.5 3 Q2 0.5 5 1.5 M5 0.3 L5.5 2 L3.8 2.3 M7.5 4 Q6 6.5 3 5.5 M3 6.7 L2.5 5 L4.2 4.7" stroke="#2a6ac8" stroke-width="1" fill="none"/></svg><div class="srch" style="left:696.5px;top:184.0px;width:98.5px;height:11.5px;background:#dedede"></div><div class="t" style="left:699.5px;top:186.5px;font-size:7px;color:#8a8a8a;transform:scaleX(0.86);transform-origin:0 0;font-style:italic">Search 9-9-2013_9-55-52_AM</div><svg style="position:absolute;left:785.0px;top:186.0px" width="8" height="8" viewBox="0 0 8 8"><circle cx="4.8" cy="3.2" r="2.4" fill="none" stroke="#2a5ab8" stroke-width="1.1"/><path d="M3.2 4.8L0.8 7.2" stroke="#2a5ab8" stroke-width="1.4"/></svg><div class="tb" style="left:535.0px;top:200.0px;width:261.0px;height:16px;"></div><div class="t" style="left:545.0px;top:204.5px;font-size:7px;color:#1e395b;transform:scaleX(0.87);transform-origin:0 0;">Organize</div><svg style="position:absolute;left:571.0px;top:207.0px" width="5" height="3"><path d="M0 0H5L2.5 3Z" fill="#1e395b"/></svg><div class="t" style="left:593.0px;top:204.5px;font-size:7px;color:#1e395b;transform:scaleX(0.9);transform-origin:0 0;">Burn</div><div class="t" style="left:622.0px;top:204.5px;font-size:7px;color:#1e395b;transform:scaleX(0.92);transform-origin:0 0;">New folder</div><svg style="position:absolute;left:731.0px;top:204.0px" width="10" height="9" viewBox="0 0 10 9"><path d="M0 1H2M3 1H9M0 4H2M3 4H9M0 7H2M3 7H9" stroke="#6a7a8a" stroke-width="1"/></svg><svg style="position:absolute;left:745.0px;top:207.0px" width="5" height="3"><path d="M0 0H5L2.5 3Z" fill="#1e2e4e"/></svg><div style="left:760.0px;top:203.5px;width:10px;height:9px;background:linear-gradient(90deg,#fff 55%,#8fc0e8 55%);border:1px solid #6f8aa8"></div><div style="left:780.0px;top:203.0px;width:9px;height:9px;background:radial-gradient(circle at 40% 35%,#5a8ad8,#1a3a8a);border-radius:50%"></div><div class="t" style="left:782.5px;top:204.5px;font:bold 6.5px Liberation Sans,sans-serif;color:#fff">?</div><div style="left:535.0px;top:216.0px;width:261.0px;height:258.5px;background:#fff"></div><div style="left:674.0px;top:216.0px;width:9px;height:258.5px;background:#ededed"></div><svg style="position:absolute;left:676.0px;top:220.0px" width="5" height="3"><path d="M0 3H5L2.5 0Z" fill="#222"/></svg><svg style="position:absolute;left:676.0px;top:466.5px" width="5" height="3"><path d="M0 0H5L2.5 3Z" fill="#222"/></svg><div class="thumb" style="left:674.5px;top:303.5px;width:8px;height:83px;"></div><div style="left:676.5px;top:343.0px;width:4px;height:4.5px;border-top:1px solid #9a9a9a;border-bottom:1px solid #9a9a9a;background:linear-gradient(transparent 35%,#9a9a9a 35%,#9a9a9a 65%,transparent 65%)"></div><div style="left:683.0px;top:216.0px;width:1px;height:258.5px;background:#f4f4f4"></div><div style="left:535.0px;top:216.0px;width:139px;height:258.5px;overflow:hidden"><div style="left:-535.0px;top:-216.0px;width:1024px;height:563px"><svg style="position:absolute;left:562.0px;top:217.0px" width="8" height="10" viewBox="0 0 8 10"><use href="#fsm"/></svg><div class="t" style="left:573.3px;top:218.1px;font-size:7.2px;color:#161616;transform:scaleX(0.88);transform-origin:0 0;-webkit-text-stroke:0.12px #333">BCOB</div><svg style="position:absolute;left:562.0px;top:228.13px" width="8" height="10" viewBox="0 0 8 10"><use href="#fsm"/></svg><div class="t" style="left:573.3px;top:229.23px;font-size:7.2px;color:#161616;transform:scaleX(0.88);transform-origin:0 0;-webkit-text-stroke:0.12px #333">Campus Merchants</div><svg style="position:absolute;left:562.0px;top:239.26px" width="8" height="10" viewBox="0 0 8 10"><use href="#fsm"/></svg><svg style="position:absolute;left:561.0px;top:239.26px" width="10" height="10" viewBox="0 0 10 10"><circle cx="5" cy="4.2" r="3" fill="rgba(235,245,210,0.7)" stroke="#8a8f70" stroke-width="1"/><path d="M2.8 6.6L0.8 9" stroke="#7a7050" stroke-width="1.4"/></svg><div class="t" style="left:573.3px;top:240.35999999999999px;font-size:7.2px;color:#161616;transform:scaleX(0.88);transform-origin:0 0;-webkit-text-stroke:0.12px #333">COAS</div><svg style="position:absolute;left:567.2px;top:250.39px" width="8" height="10" viewBox="0 0 8 10"><use href="#fsm"/></svg><div class="t" style="left:578.5px;top:251.48999999999998px;font-size:7.2px;color:#161616;transform:scaleX(0.88);transform-origin:0 0;-webkit-text-stroke:0.12px #333">COMM</div><svg style="position:absolute;left:567.2px;top:261.52px" width="8" height="10" viewBox="0 0 8 10"><use href="#fsm"/></svg><div class="t" style="left:578.5px;top:262.62px;font-size:7.2px;color:#161616;transform:scaleX(0.88);transform-origin:0 0;-webkit-text-stroke:0.12px #333">GEES</div><svg style="position:absolute;left:567.2px;top:272.65px" width="8" height="10" viewBox="0 0 8 10"><use href="#fsm"/></svg><svg style="position:absolute;left:566.2px;top:272.65px" width="10" height="10" viewBox="0 0 10 10"><circle cx="5" cy="4.2" r="3" fill="rgba(235,245,210,0.7)" stroke="#8a8f70" stroke-width="1"/><path d="M2.8 6.6L0.8 9" stroke="#7a7050" stroke-width="1.4"/></svg><div class="t" style="left:578.5px;top:273.75px;font-size:7.2px;color:#161616;transform:scaleX(0.88);transform-origin:0 0;-webkit-text-stroke:0.12px #333">LCS</div><svg style="position:absolute;left:572.4px;top:283.78px" width="8" height="10" viewBox="0 0 8 10"><use href="#fsm"/></svg><div class="t" style="left:583.6999999999999px;top:284.88px;font-size:7.2px;color:#161616;transform:scaleX(0.88);transform-origin:0 0;-webkit-text-stroke:0.12px #333">LABS</div><svg style="position:absolute;left:572.4px;top:294.91px" width="8" height="10" viewBox="0 0 8 10"><use href="#fsm"/></svg><svg style="position:absolute;left:571.4px;top:294.91px" width="10" height="10" viewBox="0 0 10 10"><circle cx="5" cy="4.2" r="3" fill="rgba(235,245,210,0.7)" stroke="#8a8f70" stroke-width="1"/><path d="M2.8 6.6L0.8 9" stroke="#7a7050" stroke-width="1.4"/></svg><div class="t" style="left:583.6999999999999px;top:296.01000000000005px;font-size:7.2px;color:#161616;transform:scaleX(0.88);transform-origin:0 0;-webkit-text-stroke:0.12px #333">LRC</div><svg style="position:absolute;left:577.6px;top:306.04px" width="8" height="10" viewBox="0 0 8 10"><use href="#fsm"/></svg><div class="t" style="left:588.9px;top:307.14000000000004px;font-size:7.2px;color:#161616;transform:scaleX(0.88);transform-origin:0 0;-webkit-text-stroke:0.12px #333">DVDRegionFree</div><svg style="position:absolute;left:577.6px;top:317.17px" width="8" height="10" viewBox="0 0 8 10"><use href="#fsm"/></svg><div class="t" style="left:588.9px;top:318.27000000000004px;font-size:7.2px;color:#161616;transform:scaleX(0.88);transform-origin:0 0;-webkit-text-stroke:0.12px #333">IPA12US</div><svg style="position:absolute;left:577.6px;top:328.3px" width="8" height="10" viewBox="0 0 8 10"><use href="#fsm"/></svg><div class="t" style="left:588.9px;top:329.40000000000003px;font-size:7.2px;color:#161616;transform:scaleX(0.88);transform-origin:0 0;-webkit-text-stroke:0.12px #333">media</div><svg style="position:absolute;left:577.6px;top:339.43px" width="8" height="10" viewBox="0 0 8 10"><use href="#fsm"/></svg><div class="t" style="left:588.9px;top:340.53000000000003px;font-size:7.2px;color:#161616;transform:scaleX(0.88);transform-origin:0 0;-webkit-text-stroke:0.12px #333">misc</div><svg style="position:absolute;left:577.6px;top:350.56px" width="8" height="10" viewBox="0 0 8 10"><use href="#fsm"/></svg><svg style="position:absolute;left:576.6px;top:350.56px" width="10" height="10" viewBox="0 0 10 10"><circle cx="5" cy="4.2" r="3" fill="rgba(235,245,210,0.7)" stroke="#8a8f70" stroke-width="1"/><path d="M2.8 6.6L0.8 9" stroke="#7a7050" stroke-width="1.4"/></svg><div class="t" style="left:588.9px;top:351.66px;font-size:7.2px;color:#161616;transform:scaleX(0.88);transform-origin:0 0;-webkit-text-stroke:0.12px #333">sanako</div><svg style="position:absolute;left:582.8px;top:361.69px" width="8" height="10" viewBox="0 0 8 10"><use href="#fsm"/></svg><div class="t" style="left:594.0999999999999px;top:362.79px;font-size:7.2px;color:#161616;transform:scaleX(0.88);transform-origin:0 0;-webkit-text-stroke:0.12px #333">application</div><svg style="position:absolute;left:582.8px;top:372.82000000000005px" width="8" height="10" viewBox="0 0 8 10"><use href="#fsm"/></svg><div class="t" style="left:594.0999999999999px;top:373.9200000000001px;font-size:7.2px;color:#161616;transform:scaleX(0.88);transform-origin:0 0;-webkit-text-stroke:0.12px #333">document</div><svg style="position:absolute;left:582.8px;top:383.95000000000005px" width="8" height="10" viewBox="0 0 8 10"><use href="#fsm"/></svg><div class="t" style="left:594.0999999999999px;top:385.05000000000007px;font-size:7.2px;color:#161616;transform:scaleX(0.88);transform-origin:0 0;-webkit-text-stroke:0.12px #333">examresult</div><svg style="position:absolute;left:582.8px;top:395.08000000000004px" width="8" height="10" viewBox="0 0 8 10"><use href="#fsm"/></svg><div class="t" style="left:594.0999999999999px;top:396.18000000000006px;font-size:7.2px;color:#161616;transform:scaleX(0.88);transform-origin:0 0;-webkit-text-stroke:0.12px #333">examtest</div><svg style="position:absolute;left:582.8px;top:406.21000000000004px" width="8" height="10" viewBox="0 0 8 10"><use href="#fsm"/></svg><div class="t" style="left:594.0999999999999px;top:407.31000000000006px;font-size:7.2px;color:#161616;transform:scaleX(0.88);transform-origin:0 0;-webkit-text-stroke:0.12px #333">media</div><svg style="position:absolute;left:582.8px;top:417.34000000000003px" width="8" height="10" viewBox="0 0 8 10"><use href="#fsm"/></svg><div class="t" style="left:594.0999999999999px;top:418.44000000000005px;font-size:7.2px;color:#161616;transform:scaleX(0.88);transform-origin:0 0;-webkit-text-stroke:0.12px #333">policy</div><svg style="position:absolute;left:582.8px;top:428.47px" width="8" height="10" viewBox="0 0 8 10"><use href="#fsm"/></svg><div class="t" style="left:594.0999999999999px;top:429.57000000000005px;font-size:7.2px;color:#161616;transform:scaleX(0.88);transform-origin:0 0;-webkit-text-stroke:0.12px #333">session</div><svg style="position:absolute;left:582.8px;top:439.6px" width="8" height="10" viewBox="0 0 8 10"><use href="#fsm"/></svg><svg style="position:absolute;left:581.8px;top:439.6px" width="10" height="10" viewBox="0 0 10 10"><circle cx="5" cy="4.2" r="3" fill="rgba(235,245,210,0.7)" stroke="#8a8f70" stroke-width="1"/><path d="M2.8 6.6L0.8 9" stroke="#7a7050" stroke-width="1.4"/></svg><div class="t" style="left:594.0999999999999px;top:440.70000000000005px;font-size:7.2px;color:#161616;transform:scaleX(0.88);transform-origin:0 0;-webkit-text-stroke:0.12px #333">student</div><div style="left:535.0px;top:450.23px;width:139px;height:10.5px;background:linear-gradient(#f0f0f0,#dcdcdc);border-top:1px solid #e0e0e0"></div><svg style="position:absolute;left:588.0px;top:450.73px" width="8" height="10" viewBox="0 0 8 10"><use href="#fsm"/></svg><svg style="position:absolute;left:587.0px;top:450.73px" width="10" height="10" viewBox="0 0 10 10"><circle cx="5" cy="4.2" r="3" fill="rgba(235,245,210,0.7)" stroke="#8a8f70" stroke-width="1"/><path d="M2.8 6.6L0.8 9" stroke="#7a7050" stroke-width="1.4"/></svg><div class="t" style="left:599.3px;top:451.83000000000004px;font-size:7.2px;color:#161616;transform:scaleX(0.88);transform-origin:0 0;-webkit-text-stroke:0.12px #333">9-9-2013_9-55-52_AM</div><svg style="position:absolute;left:582.8px;top:461.86px" width="8" height="10" viewBox="0 0 8 10"><use href="#fsm"/></svg><div class="t" style="left:594.0999999999999px;top:462.96000000000004px;font-size:7.2px;color:#161616;transform:scaleX(0.88);transform-origin:0 0;-webkit-text-stroke:0.12px #333">teacher</div><svg style="position:absolute;left:582.8px;top:472.99px" width="8" height="10" viewBox="0 0 8 10"><use href="#fsm"/></svg><div class="t" style="left:594.0999999999999px;top:474.09000000000003px;font-size:7.2px;color:#161616;transform:scaleX(0.88);transform-origin:0 0;-webkit-text-stroke:0.12px #333"></div></div></div><div class="t" style="left:693.0px;top:219.5px;font-size:7px;color:#4d6185;transform:scaleX(0.9);transform-origin:0 0;">Name</div><svg style="position:absolute;left:754.0px;top:217.0px" width="5" height="3"><path d="M0 3H5L2.5 0Z" fill="#6a8ab0"/></svg><div style="left:684.0px;top:228.0px;width:112.0px;height:246.5px;overflow:hidden"><div style="left:-684.0px;top:-228.0px;width:1024px;height:563px"><svg style="position:absolute;left:694.8px;top:233.5px" width="9" height="10" viewBox="0 0 9 10"><use href="#mp3s"/></svg><div class="t" style="left:704.5px;top:234.9px;font-size:7.2px;color:#111;transform:scaleX(0.81);transform-origin:0 0;-webkit-text-stroke:0.12px #333">LXCOED434-PC06.MP3</div><svg style="position:absolute;left:694.8px;top:244.6px" width="9" height="10" viewBox="0 0 9 10"><use href="#mp3s"/></svg><div class="t" style="left:704.5px;top:246.0px;font-size:7.2px;color:#111;transform:scaleX(0.81);transform-origin:0 0;-webkit-text-stroke:0.12px #333">LXCOED434-PC13.MP3</div><svg style="position:absolute;left:694.8px;top:255.7px" width="9" height="10" viewBox="0 0 9 10"><use href="#mp3s"/></svg><div class="t" style="left:704.5px;top:257.1px;font-size:7.2px;color:#111;transform:scaleX(0.81);transform-origin:0 0;-webkit-text-stroke:0.12px #333">LXCOED434-PC19.MP3</div><svg style="position:absolute;left:694.8px;top:266.8px" width="9" height="10" viewBox="0 0 9 10"><use href="#mp3s"/></svg><div class="t" style="left:704.5px;top:268.20000000000005px;font-size:7.2px;color:#111;transform:scaleX(0.81);transform-origin:0 0;-webkit-text-stroke:0.12px #333">LXCOED434-PC20.MP3</div><svg style="position:absolute;left:694.8px;top:277.9px" width="9" height="10" viewBox="0 0 9 10"><use href="#mp3s"/></svg><div class="t" style="left:704.5px;top:279.3px;font-size:7.2px;color:#111;transform:scaleX(0.81);transform-origin:0 0;-webkit-text-stroke:0.12px #333">LXCOED434-PC22.MP3</div><svg style="position:absolute;left:694.8px;top:289.0px" width="9" height="10" viewBox="0 0 9 10"><use href="#mp3s"/></svg><div class="t" style="left:704.5px;top:290.40000000000003px;font-size:7.2px;color:#111;transform:scaleX(0.81);transform-origin:0 0;-webkit-text-stroke:0.12px #333">LXCOED434-PC23.MP3</div><svg style="position:absolute;left:694.8px;top:300.09999999999997px" width="9" height="10" viewBox="0 0 9 10"><use href="#mp3s"/></svg><div class="t" style="left:704.5px;top:301.5px;font-size:7.2px;color:#111;transform:scaleX(0.81);transform-origin:0 0;-webkit-text-stroke:0.12px #333">LXCOED434-PC24.MP3</div><svg style="position:absolute;left:694.8px;top:311.2px" width="9" height="10" viewBox="0 0 9 10"><use href="#mp3s"/></svg><div class="t" style="left:704.5px;top:312.6px;font-size:7.2px;color:#111;transform:scaleX(0.81);transform-origin:0 0;-webkit-text-stroke:0.12px #333">LXCOED434-PC25.MP3</div><svg style="position:absolute;left:694.8px;top:322.3px" width="9" height="10" viewBox="0 0 9 10"><use href="#mp3s"/></svg><div class="t" style="left:704.5px;top:323.70000000000005px;font-size:7.2px;color:#111;transform:scaleX(0.81);transform-origin:0 0;-webkit-text-stroke:0.12px #333">LXCOED434-PC28.MP3</div><svg style="position:absolute;left:694.8px;top:333.4px" width="9" height="10" viewBox="0 0 9 10"><use href="#mp3s"/></svg><div class="t" style="left:704.5px;top:334.8px;font-size:7.2px;color:#111;transform:scaleX(0.81);transform-origin:0 0;-webkit-text-stroke:0.12px #333">LXCOED434-PC29.MP3</div><svg style="position:absolute;left:694.8px;top:344.5px" width="9" height="10" viewBox="0 0 9 10"><use href="#mp3s"/></svg><div class="t" style="left:704.5px;top:345.90000000000003px;font-size:7.2px;color:#111;transform:scaleX(0.81);transform-origin:0 0;-webkit-text-stroke:0.12px #333">LXCOED434-PC30.MP3</div><svg style="position:absolute;left:694.8px;top:355.59999999999997px" width="9" height="10" viewBox="0 0 9 10"><use href="#mp3s"/></svg><div class="t" style="left:704.5px;top:357.0px;font-size:7.2px;color:#111;transform:scaleX(0.81);transform-origin:0 0;-webkit-text-stroke:0.12px #333">LXCOED434-PC31.MP3</div><svg style="position:absolute;left:694.8px;top:366.7px" width="9" height="10" viewBox="0 0 9 10"><use href="#mp3s"/></svg><div class="t" style="left:704.5px;top:368.1px;font-size:7.2px;color:#111;transform:scaleX(0.81);transform-origin:0 0;-webkit-text-stroke:0.12px #333">LXCOED434-PC33.MP3</div><svg style="position:absolute;left:694.8px;top:377.8px" width="9" height="10" viewBox="0 0 9 10"><use href="#mp3s"/></svg><div class="t" style="left:704.5px;top:379.20000000000005px;font-size:7.2px;color:#111;transform:scaleX(0.81);transform-origin:0 0;-webkit-text-stroke:0.12px #333">LXCOED434-PC34.MP3</div><svg style="position:absolute;left:694.8px;top:388.90000000000003px" width="9" height="10" viewBox="0 0 9 10"><use href="#mp3s"/></svg><div class="t" style="left:704.5px;top:390.30000000000007px;font-size:7.2px;color:#111;transform:scaleX(0.81);transform-origin:0 0;-webkit-text-stroke:0.12px #333">LXCOED434-PC35.MP3</div><svg style="position:absolute;left:694.8px;top:400.0px" width="9" height="10" viewBox="0 0 9 10"><use href="#mp3s"/></svg><div class="t" style="left:704.5px;top:401.40000000000003px;font-size:7.2px;color:#111;transform:scaleX(0.81);transform-origin:0 0;-webkit-text-stroke:0.12px #333">LXCOED434-PC36.MP3</div><svg style="position:absolute;left:694.8px;top:411.09999999999997px" width="9" height="10" viewBox="0 0 9 10"><use href="#mp3s"/></svg><div class="t" style="left:704.5px;top:412.5px;font-size:7.2px;color:#111;transform:scaleX(0.81);transform-origin:0 0;-webkit-text-stroke:0.12px #333">mpink2.MP3</div></div></div><div style="left:684.0px;top:465.5px;width:112.0px;height:9px;background:#ececec"></div><svg style="position:absolute;left:687.0px;top:468.0px" width="3" height="5"><path d="M3 0V5L0 2.5Z" fill="#333"/></svg><svg style="position:absolute;left:790.0px;top:468.0px" width="3" height="5"><path d="M0 0V5L3 2.5Z" fill="#333"/></svg><div class="thumbh" style="left:693px;top:466.0px;width:32.5px;height:8px;"></div><div style="left:707.25px;top:468.5px;width:4px;height:3px;border-left:1px solid #888;border-right:1px solid #888"></div><div class="dp" style="left:535.0px;top:474.5px;width:261.0px;height:28.0px;"></div><svg style="position:absolute;left:546px;top:478px;transform:scale(2.6,2.4);transform-origin:0 0" width="8" height="10" viewBox="0 0 8 10"><use href="#fsm"/></svg><div class="t" style="left:577px;top:480.5px;font-size:7px;color:#1e395b;transform:scaleX(0.97);transform-origin:0 0;">17 items</div>
<div class="tk" style="left:8px;top:542px;width:1016px;height:21px;"></div>
<div style="left:12px;top:543px;width:20px;height:20px;background:radial-gradient(circle at 50% 85%,#40e0ff 0%,#2a90d8 30%,#1a58a8 60%,#0a2a60 100%);border-radius:50%;border:1px solid #101820;box-shadow:0 0 1.5px #4aa0e0"></div>
<div style="left:14.5px;top:544px;width:15px;height:8px;background:linear-gradient(rgba(255,255,255,0.55),rgba(255,255,255,0.05));border-radius:50% 50% 40% 40%"></div>
<svg style="position:absolute;left:17px;top:547px" width="11" height="11" viewBox="0 0 11 11"><path d="M0.5 1.5Q3 0.5 5 1.5V5Q3 4 0.5 5Z" fill="#f25022"/><path d="M5.5 1.5Q8 2.5 10.5 1.5V5Q8 6 5.5 5Z" fill="#7fba00"/><path d="M0.5 5.7Q3 4.7 5 5.7V9.4Q3 8.4 0.5 9.4Z" fill="#00a4ef"/><path d="M5.5 5.7Q8 6.7 10.5 5.7V9.4Q8 10.4 5.5 9.4Z" fill="#ffb900"/></svg>
<div class="tbn" style="left:39.0px;top:542.5px;width:36px;height:20.5px;"></div>
<svg style="position:absolute;left:43.0px;top:543.5px" width="13" height="18" viewBox="0 0 13 18"><use href="#ftb"/></svg>
<div class="t" style="left:60.5px;top:549.5px;font-size:7px;font-weight:bold;letter-spacing:-0.3px;color:#f4f4f4">fr...</div>
<div class="tbn" style="left:75.65px;top:542.5px;width:36px;height:20.5px;"></div>
<svg style="position:absolute;left:79.65px;top:543.5px" width="13" height="18" viewBox="0 0 13 18"><use href="#ftb"/></svg>
<div class="t" style="left:97.15px;top:549.5px;font-size:7px;font-weight:bold;letter-spacing:-0.3px;color:#f4f4f4">S...</div>
<div class="tbn" style="left:112.3px;top:542.5px;width:36px;height:20.5px;"></div>
<svg style="position:absolute;left:116.3px;top:543.5px" width="13" height="18" viewBox="0 0 13 18"><use href="#ftb"/></svg>
<div class="t" style="left:133.8px;top:549.5px;font-size:7px;font-weight:bold;letter-spacing:-0.3px;color:#f4f4f4">9-...</div>
<div class="tby" style="left:148.95px;top:542.5px;width:36px;height:20.5px;"></div>
<svg style="position:absolute;left:152.95px;top:543.5px" width="13" height="18" viewBox="0 0 13 18"><use href="#ftb"/></svg>
<div class="t" style="left:170.45px;top:549.5px;font-size:7px;font-weight:bold;letter-spacing:-0.3px;color:#f4f4f4">9-...</div>
<div class="tbn" style="left:185.6px;top:542.5px;width:36px;height:20.5px;"></div>
<svg style="position:absolute;left:189.6px;top:543.5px" width="13" height="18" viewBox="0 0 13 18"><use href="#ftb"/></svg>
<div class="t" style="left:207.1px;top:549.5px;font-size:7px;font-weight:bold;letter-spacing:-0.3px;color:#f4f4f4">9-...</div>
<div class="tbn" style="left:222.25px;top:542.5px;width:36px;height:20.5px;"></div>
<svg style="position:absolute;left:226.25px;top:543.5px" width="13" height="18" viewBox="0 0 13 18"><use href="#ftb"/></svg>
<div class="t" style="left:243.75px;top:549.5px;font-size:7px;font-weight:bold;letter-spacing:-0.3px;color:#f4f4f4">9-...</div>
<div class="tbn" style="left:258.9px;top:542.5px;width:36px;height:20.5px;"></div>
<svg style="position:absolute;left:262.9px;top:543.5px" width="13" height="18" viewBox="0 0 13 18"><use href="#ftb"/></svg>
<div class="t" style="left:280.4px;top:549.5px;font-size:7px;font-weight:bold;letter-spacing:-0.3px;color:#f4f4f4">9-...</div>
<div class="tbn" style="left:295.55px;top:542.5px;width:36px;height:20.5px;"></div>
<svg style="position:absolute;left:299.55px;top:543.5px" width="13" height="18" viewBox="0 0 13 18"><use href="#ftb"/></svg>
<div class="t" style="left:317.05px;top:549.5px;font-size:7px;font-weight:bold;letter-spacing:-0.3px;color:#f4f4f4">9-...</div>
<div class="tbn" style="left:332.2px;top:542.5px;width:36px;height:20.5px;"></div>
<svg style="position:absolute;left:336.2px;top:543.5px" width="13" height="18" viewBox="0 0 13 18"><use href="#ftb"/></svg>
<div class="t" style="left:353.7px;top:549.5px;font-size:7px;font-weight:bold;letter-spacing:-0.3px;color:#f4f4f4">9-...</div>
<div class="tbn" style="left:368.84999999999997px;top:542.5px;width:36px;height:20.5px;"></div>
<svg style="position:absolute;left:372.84999999999997px;top:543.5px" width="13" height="18" viewBox="0 0 13 18"><use href="#ftb"/></svg>
<div class="t" style="left:390.34999999999997px;top:549.5px;font-size:7px;font-weight:bold;letter-spacing:-0.3px;color:#f4f4f4">9-...</div>
<div class="tbn" style="left:405.5px;top:542.5px;width:36px;height:20.5px;"></div>
<svg style="position:absolute;left:409.5px;top:543.5px" width="13" height="18" viewBox="0 0 13 18"><use href="#ftb"/></svg>
<div class="t" style="left:427.0px;top:549.5px;font-size:7px;font-weight:bold;letter-spacing:-0.3px;color:#f4f4f4">9-...</div>
<div class="tbn" style="left:442.15px;top:542.5px;width:36px;height:20.5px;"></div>
<svg style="position:absolute;left:446.15px;top:543.5px" width="13" height="18" viewBox="0 0 13 18"><use href="#ftb"/></svg>
<div class="t" style="left:463.65px;top:549.5px;font-size:7px;font-weight:bold;letter-spacing:-0.3px;color:#f4f4f4">9-...</div>
<div class="tbn" style="left:478.79999999999995px;top:542.5px;width:36px;height:20.5px;"></div>
<svg style="position:absolute;left:482.79999999999995px;top:543.5px" width="13" height="18" viewBox="0 0 13 18"><use href="#ftb"/></svg>
<div class="t" style="left:500.29999999999995px;top:549.5px;font-size:7px;font-weight:bold;letter-spacing:-0.3px;color:#f4f4f4">9-...</div>
<div class="tbn" style="left:515.45px;top:542.5px;width:36px;height:20.5px;"></div>
<svg style="position:absolute;left:519.45px;top:543.5px" width="13" height="18" viewBox="0 0 13 18"><use href="#ftb"/></svg>
<div class="t" style="left:536.95px;top:549.5px;font-size:7px;font-weight:bold;letter-spacing:-0.3px;color:#f4f4f4">9-...</div>
<div class="tbn" style="left:552.1px;top:542.5px;width:36px;height:20.5px;"></div>
<svg style="position:absolute;left:556.1px;top:543.5px" width="13" height="18" viewBox="0 0 13 18"><use href="#ftb"/></svg>
<div class="t" style="left:573.6px;top:549.5px;font-size:7px;font-weight:bold;letter-spacing:-0.3px;color:#f4f4f4">9-...</div>
<div class="tbn" style="left:588.75px;top:542.5px;width:36px;height:20.5px;"></div>
<svg style="position:absolute;left:592.75px;top:543.5px" width="13" height="18" viewBox="0 0 13 18"><use href="#ftb"/></svg>
<div class="t" style="left:610.25px;top:549.5px;font-size:7px;font-weight:bold;letter-spacing:-0.3px;color:#f4f4f4">9-...</div>
<div class="tbn" style="left:625.4px;top:542.5px;width:36px;height:20.5px;"></div>
<svg style="position:absolute;left:629.4px;top:543.5px" width="13" height="18" viewBox="0 0 13 18"><use href="#ftb"/></svg>
<div class="t" style="left:646.9px;top:549.5px;font-size:7px;font-weight:bold;letter-spacing:-0.3px;color:#f4f4f4">9-...</div>
<div class="tbh" style="left:662.05px;top:542.5px;width:36px;height:20.5px;"></div>
<svg style="position:absolute;left:666.05px;top:543.5px" width="13" height="18" viewBox="0 0 13 18"><use href="#ftb"/></svg>
<div class="t" style="left:683.55px;top:549.5px;font-size:7px;font-weight:bold;letter-spacing:-0.3px;color:#f4f4f4">9-...</div>
<div class="tbn" style="left:698.6999999999999px;top:542.5px;width:36px;height:20.5px;"></div>
<svg style="position:absolute;left:702.6999999999999px;top:543.5px" width="13" height="18" viewBox="0 0 13 18"><use href="#ftb"/></svg>
<div class="t" style="left:720.1999999999999px;top:549.5px;font-size:7px;font-weight:bold;letter-spacing:-0.3px;color:#f4f4f4">9-...</div>
<div class="tbn" style="left:735.35px;top:542.5px;width:36px;height:20.5px;"></div>
<svg style="position:absolute;left:739.35px;top:543.5px" width="13" height="18" viewBox="0 0 13 18"><use href="#ftb"/></svg>
<div class="t" style="left:756.85px;top:549.5px;font-size:7px;font-weight:bold;letter-spacing:-0.3px;color:#f4f4f4">9-...</div>
<div class="tbn" style="left:772.0px;top:542.5px;width:36px;height:20.5px;"></div>
<svg style="position:absolute;left:776.0px;top:543.5px" width="13" height="18" viewBox="0 0 13 18"><use href="#ftb"/></svg>
<div class="t" style="left:793.5px;top:549.5px;font-size:7px;font-weight:bold;letter-spacing:-0.3px;color:#f4f4f4">9-...</div>
<div class="tbn" style="left:811.5px;top:542.5px;width:36px;height:20.5px;"></div>
<div class="t" style="left:833.0px;top:549.5px;font-size:7px;font-weight:bold;letter-spacing:-0.3px;color:#f4f4f4">S...</div>
<div class="tbn" style="left:849.5px;top:542.5px;width:36px;height:20.5px;"></div>
<div class="t" style="left:871.0px;top:549.5px;font-size:7px;font-weight:bold;letter-spacing:-0.3px;color:#f4f4f4">Sa...</div>
<div class="tbn" style="left:887px;top:542.5px;width:36px;height:20.5px;"></div>
<div class="t" style="left:908.5px;top:549.5px;font-size:7px;font-weight:bold;letter-spacing:-0.3px;color:#f4f4f4">L...</div>
<div style="left:816px;top:545px;width:13px;height:14px;background:linear-gradient(#f8f8f8,#dcdcdc);border:1px solid #aaa"></div>
<div style="left:822px;top:551px;width:6px;height:7px;background:#b02a2a"></div>
<div style="left:818px;top:546px;width:4px;height:8px;background:#f0b830;transform:rotate(-20deg)"></div>
<svg style="position:absolute;left:853px;top:544px" width="16" height="17" viewBox="0 0 16 17"><circle cx="8" cy="9" r="6" fill="#2a8ae8"/><circle cx="8" cy="9" r="3.2" fill="#fff"/><rect x="4" y="8.4" width="8" height="1.3" fill="#2a8ae8"/><path d="M2 15Q-1 12 5 6Q11 1 15 2Q17 4 12 9" stroke="#f0b820" stroke-width="1.6" fill="none"/></svg>
<svg style="position:absolute;left:891px;top:544px" width="15" height="16" viewBox="0 0 15 16"><path d="M2 10Q1 1 7.5 1Q14 1 13 10" stroke="#1a2ab0" stroke-width="2" fill="none"/><rect x="3" y="6" width="9" height="8" rx="2" fill="#f0b000"/><rect x="4" y="9" width="7" height="2" fill="#e03020"/><rect x="0.5" y="8" width="3" height="6" rx="1" fill="#1a2ab0"/><rect x="11.5" y="8" width="3" height="6" rx="1" fill="#1a2ab0"/></svg>
<div class="t" style="left:929.5px;top:548px;font-size:6.5px;color:#eee">EN</div>
<div style="left:942px;top:548px;width:8px;height:6px;background:#cfd4d8;border-radius:1px"></div>
<svg style="position:absolute;left:956px;top:550px" width="5" height="3"><path d="M0 3H5L2.5 0Z" fill="#fff"/></svg>
<div style="left:968px;top:547px;width:8px;height:8px;border:1px solid #ddd;border-radius:1px"></div>
<div class="t" style="left:985px;top:546px;font-size:6.5px;letter-spacing:-0.3px;color:#fff">10:38 AM</div>
<div class="t" style="left:986px;top:555px;font-size:6.5px;letter-spacing:-0.3px;color:#fff">9/9/2013</div>
<div style="left:1016px;top:542px;width:8px;height:21px;background:linear-gradient(90deg,#3a4444,#1a2020);border-left:1px solid #5a6464"></div>
<svg style="position:absolute;left:1007px;top:534px" width="6" height="6"><path d="M5 1L1 5M5 3L3 5" stroke="#9ab" stroke-width="0.8" stroke-dasharray="1 1"/></svg></body></html>
